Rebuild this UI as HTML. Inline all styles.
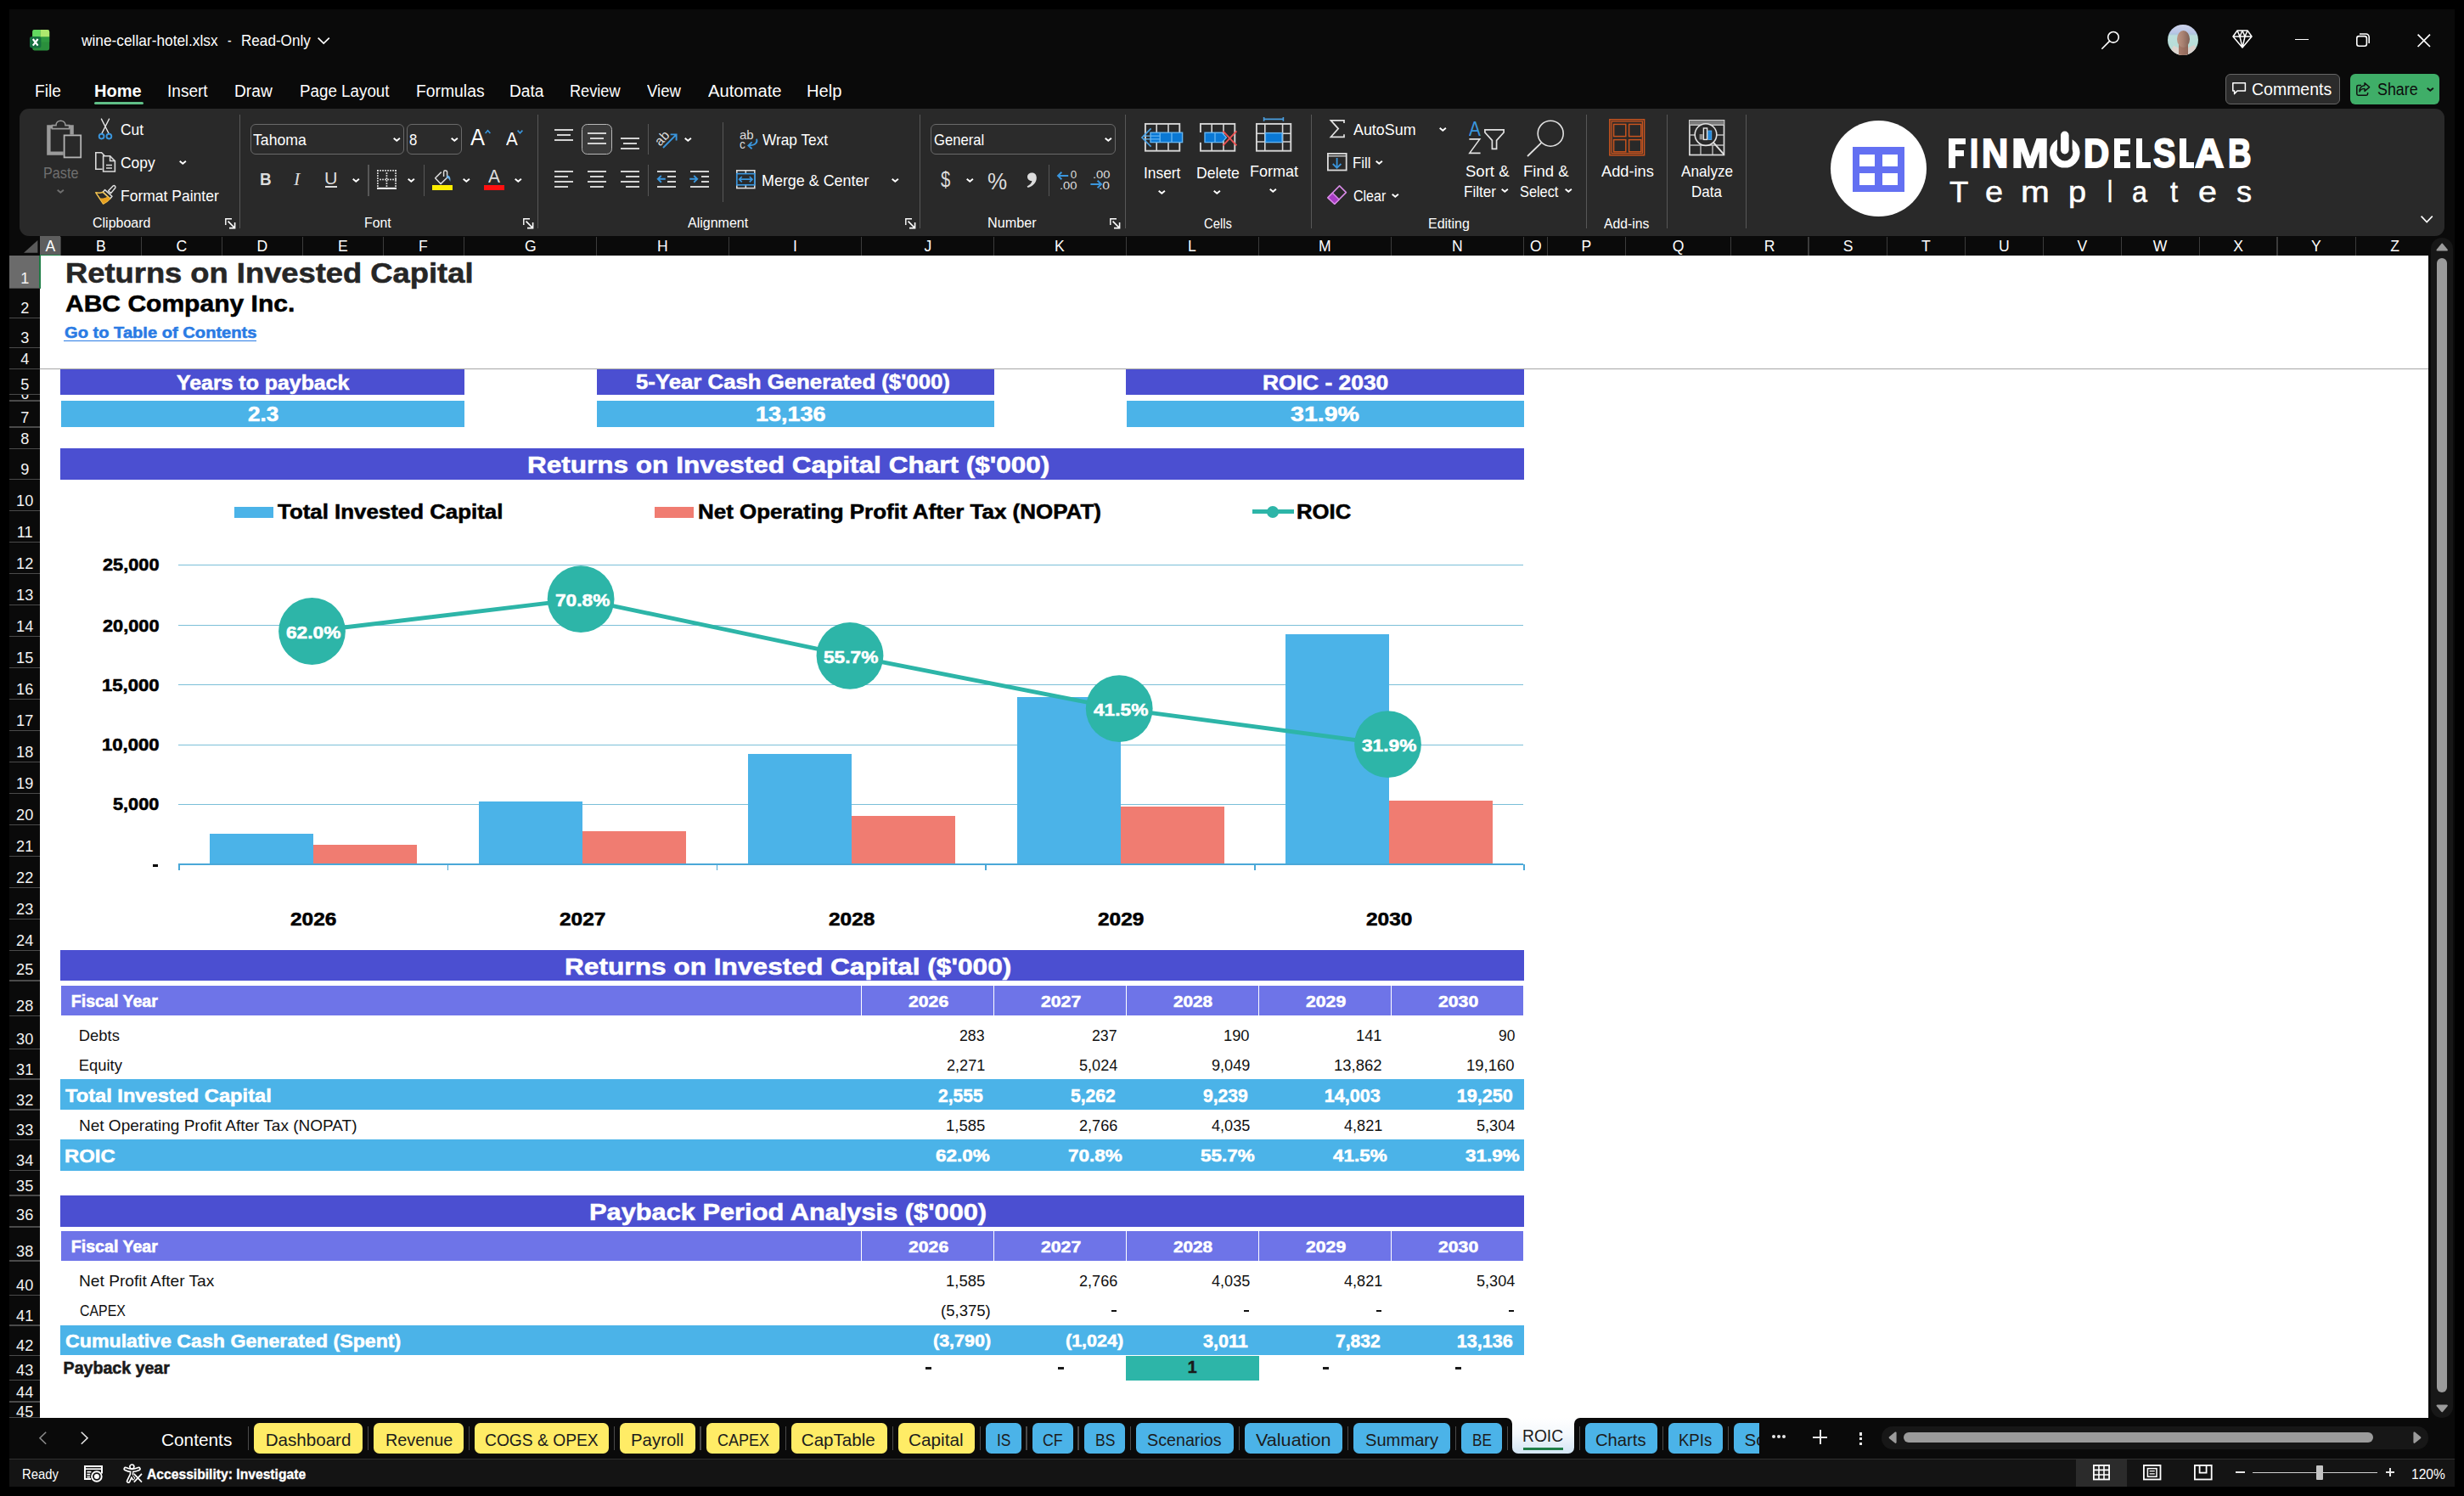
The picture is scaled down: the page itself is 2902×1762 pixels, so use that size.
<!DOCTYPE html>
<html><head><meta charset="utf-8"><title>Excel - ROIC</title>
<style>html,body{margin:0;padding:0;background:#000}
body{width:2902px;height:1762px;position:relative;overflow:hidden;font-family:'Liberation Sans',sans-serif;color:#fff}
span{display:block}</style></head>
<body>
<div style="position:absolute;left:11.00px;top:11.00px;width:2880.00px;height:1740.00px;background:#0a0a0a;"></div>
<svg style="position:absolute;left:35.00px;top:34.60px;overflow:visible;" width="24" height="25" viewBox="0 0 24 25">
      <path d="M5.6 0 H20.8 a2.4 2.4 0 0 1 2.4 2.4 V22 a2.4 2.4 0 0 1 -2.4 2.4 H5.6 a2.4 2.4 0 0 1 -2.4 -2.4 V2.4 A2.4 2.4 0 0 1 5.6 0Z" fill="#2a8f3c"/>
      <path d="M5.6 0 H12.6 V8.6 H3.2 V2.4 A2.4 2.4 0 0 1 5.6 0Z" fill="#62d860"/>
      <path d="M12.6 0 H20.8 a2.4 2.4 0 0 1 2.4 2.4 V8.6 H12.6Z" fill="#aee96e"/>
      <rect x="12.6" y="8.6" width="10.6" height="6" fill="#2f9a40"/>
      <rect x="0" y="8" width="13.4" height="13.4" rx="2.6" fill="#16703f"/>
      <path d="M3.8 11 L9.6 18.6 M9.6 11 L3.8 18.6" stroke="#fff" stroke-width="2.2"/>
    </svg>
<span style="position:absolute;left:96.15px;top:38.79px;font-size:18.2px;line-height:18.2px;font-weight:400;color:#fff;white-space:pre;transform:scaleX(0.9511);transform-origin:0 0;">wine-cellar-hotel.xlsx</span>
<span style="position:absolute;left:268.40px;top:38.79px;font-size:18.2px;line-height:18.2px;font-weight:400;color:#fff;white-space:pre;transform:scaleX(0.7667);transform-origin:0 0;">-</span>
<span style="position:absolute;left:283.66px;top:38.79px;font-size:18.2px;line-height:18.2px;font-weight:400;color:#fff;white-space:pre;transform:scaleX(0.9408);transform-origin:0 0;">Read-Only</span>
<svg style="position:absolute;left:374.00px;top:44.30px;overflow:visible;" width="14.4" height="7.6" viewBox="0 0 14.4 7.6"><polyline points="0.6,0.6 7.2,7 13.8,0.6" fill="none" stroke="#fff" stroke-width="1.7"/></svg>
<svg style="position:absolute;left:2475.00px;top:36.00px;overflow:visible;" width="22" height="22" viewBox="0 0 22 22"><circle cx="14" cy="7.8" r="6.3" fill="none" stroke="#fff" stroke-width="1.6"/><line x1="9.6" y1="12.4" x2="0.8" y2="21.2" stroke="#fff" stroke-width="1.6" stroke-linecap="round"/></svg>
<div style="position:absolute;left:2553px;top:29px;width:36px;height:36px;border-radius:50%;overflow:hidden;background:linear-gradient(180deg,#cdd4ea 0%,#b9c6e6 26%,#aec6de 31%,#bcdfdc 36%,#b6ddd7 74%,#cfe0da 100%)"><div style="position:absolute;left:3px;top:27px;width:14px;height:14px;background:#ddd5cf;transform:rotate(28deg)"></div><div style="position:absolute;left:21px;top:26px;width:14px;height:14px;background:#d8cfca;transform:rotate(-24deg)"></div><div style="position:absolute;left:13.2px;top:22px;width:11px;height:16px;background:linear-gradient(90deg,#a87c6c,#8e6658)"></div><div style="position:absolute;left:10.8px;top:6.8px;width:15.2px;height:20.4px;border-radius:50%;background:linear-gradient(90deg,#bd9584 0%,#a98272 45%,#7f6056 100%)"></div></div>
<svg style="position:absolute;left:2629.00px;top:35.00px;overflow:visible;" width="24" height="22" viewBox="0 0 24 22"><path d="M6 1 H18 L23 8 L12 21 L1 8 Z M1 8 H23 M6 1 L9 8 L12 21 L15 8 L18 1 M9 8 L12 1 L15 8" fill="none" stroke="#fff" stroke-width="1.5" stroke-linejoin="round"/></svg>
<div style="position:absolute;left:2703.00px;top:45.50px;width:16.00px;height:1.70px;background:#ffffff;"></div>
<svg style="position:absolute;left:2775.00px;top:39.00px;overflow:visible;" width="16" height="16" viewBox="0 0 16 16"><rect x="0.8" y="3.6" width="11.6" height="11.6" rx="2.4" fill="none" stroke="#fff" stroke-width="1.6"/><path d="M4 1 H11.6 a3.6 3.6 0 0 1 3.6 3.6 V12" fill="none" stroke="#fff" stroke-width="1.6"/></svg>
<svg style="position:absolute;left:2847.40px;top:39.60px;overflow:visible;" width="15.6" height="15.6" viewBox="0 0 15.6 15.6"><path d="M0.6 0.6 L15 15 M15 0.6 L0.6 15" stroke="#fff" stroke-width="1.7"/></svg>
<span style="position:absolute;left:41.02px;top:97.91px;font-size:19.6px;line-height:19.6px;font-weight:400;color:#fff;white-space:pre;transform:scaleX(0.9780);transform-origin:0 0;">File</span>
<span style="position:absolute;left:197.33px;top:97.91px;font-size:19.6px;line-height:19.6px;font-weight:400;color:#fff;white-space:pre;transform:scaleX(0.9720);transform-origin:0 0;">Insert</span>
<span style="position:absolute;left:276.42px;top:97.91px;font-size:19.6px;line-height:19.6px;font-weight:400;color:#fff;white-space:pre;transform:scaleX(0.9787);transform-origin:0 0;">Draw</span>
<span style="position:absolute;left:352.54px;top:97.91px;font-size:19.6px;line-height:19.6px;font-weight:400;color:#fff;white-space:pre;transform:scaleX(0.9590);transform-origin:0 0;">Page Layout</span>
<span style="position:absolute;left:490.21px;top:97.91px;font-size:19.6px;line-height:19.6px;font-weight:400;color:#fff;white-space:pre;transform:scaleX(0.9869);transform-origin:0 0;">Formulas</span>
<span style="position:absolute;left:599.72px;top:97.91px;font-size:19.6px;line-height:19.6px;font-weight:400;color:#fff;white-space:pre;transform:scaleX(0.9780);transform-origin:0 0;">Data</span>
<span style="position:absolute;left:670.87px;top:97.91px;font-size:19.6px;line-height:19.6px;font-weight:400;color:#fff;white-space:pre;transform:scaleX(0.9268);transform-origin:0 0;">Review</span>
<span style="position:absolute;left:762.00px;top:97.91px;font-size:19.6px;line-height:19.6px;font-weight:400;color:#fff;white-space:pre;transform:scaleX(0.9450);transform-origin:0 0;">View</span>
<span style="position:absolute;left:834.00px;top:97.91px;font-size:19.6px;line-height:19.6px;font-weight:400;color:#fff;white-space:pre;transform:scaleX(1.0325);transform-origin:0 0;">Automate</span>
<span style="position:absolute;left:949.97px;top:97.91px;font-size:19.6px;line-height:19.6px;font-weight:400;color:#fff;white-space:pre;transform:scaleX(1.0279);transform-origin:0 0;">Help</span>
<span style="position:absolute;left:110.58px;top:97.91px;font-size:19.6px;line-height:19.6px;font-weight:700;color:#fff;white-space:pre;transform:scaleX(1.0235);transform-origin:0 0;">Home</span>
<div style="position:absolute;left:111.20px;top:120.00px;width:57.60px;height:3.00px;background:#5fbe86;border-radius:1.5px"></div>
<div style="position:absolute;left:2621px;top:87.3px;width:133px;height:33.5px;border:1px solid #666;border-radius:6px;background:#2b2b2b"></div>
<svg style="position:absolute;left:2629.00px;top:97.40px;overflow:visible;" width="16.4" height="15" viewBox="0 0 16.4 15"><path d="M0.8 0.8 H15.4 V10 H6 L2.6 13.6 V10 H0.8 Z" fill="none" stroke="#fff" stroke-width="1.5" stroke-linejoin="round"/></svg>
<span style="position:absolute;left:2652.01px;top:95.81px;font-size:19.6px;line-height:19.6px;font-weight:400;color:#fff;white-space:pre;transform:scaleX(0.9944);transform-origin:0 0;">Comments</span>
<div style="position:absolute;left:2768.30px;top:87.30px;width:104.70px;height:35.50px;background:#3fae68;border-radius:6px"></div>
<svg style="position:absolute;left:2775.00px;top:97.00px;overflow:visible;" width="16.4" height="16" viewBox="0 0 16.4 16"><path d="M6 3.4 H2.4 a1.6 1.6 0 0 0 -1.6 1.6 V13.6 a1.6 1.6 0 0 0 1.6 1.6 H12 a1.6 1.6 0 0 0 1.6 -1.6 V12" fill="none" stroke="#111" stroke-width="1.5"/><path d="M10 0.8 L15.6 5.6 L10 10.4 V7.4 C7 7.4 5 8.6 4 11 C4 6.6 6.4 4 10 3.8 Z" fill="none" stroke="#111" stroke-width="1.4" stroke-linejoin="round"/></svg>
<span style="position:absolute;left:2799.70px;top:95.81px;font-size:19.6px;line-height:19.6px;font-weight:400;color:#0c0c0c;white-space:pre;transform:scaleX(0.9105);transform-origin:0 0;">Share</span>
<svg style="position:absolute;left:2858.00px;top:103.00px;overflow:visible;" width="8.6" height="5.0" viewBox="0 0 8.6 5.0"><polyline points="0.7,0.8 4.3,3.7 7.8999999999999995,0.8" fill="none" stroke="#111" stroke-width="2.0" stroke-linecap="butt" stroke-linejoin="miter"/></svg>
<div style="position:absolute;left:23.00px;top:128.00px;width:2856.00px;height:150.00px;background:#292929;border-radius:11px"></div>
<svg style="position:absolute;left:2850.50px;top:253.60px;overflow:visible;" width="14.4" height="8.4" viewBox="0 0 14.4 8.4"><polyline points="0.6,0.6 7.2,7.6 13.8,0.6" fill="none" stroke="#fff" stroke-width="1.6"/></svg>
<div style="position:absolute;left:281.90px;top:135.00px;width:1.20px;height:134.00px;background:#575757;"></div>
<div style="position:absolute;left:633.00px;top:135.00px;width:1.20px;height:134.00px;background:#575757;"></div>
<div style="position:absolute;left:1082.80px;top:135.00px;width:1.20px;height:134.00px;background:#575757;"></div>
<div style="position:absolute;left:1325.10px;top:135.00px;width:1.20px;height:134.00px;background:#575757;"></div>
<div style="position:absolute;left:1543.90px;top:135.00px;width:1.20px;height:134.00px;background:#575757;"></div>
<div style="position:absolute;left:1868.00px;top:135.00px;width:1.20px;height:134.00px;background:#575757;"></div>
<div style="position:absolute;left:1962.90px;top:135.00px;width:1.20px;height:134.00px;background:#575757;"></div>
<div style="position:absolute;left:2056.00px;top:135.00px;width:1.20px;height:134.00px;background:#575757;"></div>
<div style="position:absolute;left:850.70px;top:144.00px;width:1.20px;height:93.50px;background:#575757;"></div>
<div style="position:absolute;left:433.40px;top:194.00px;width:1.20px;height:36.50px;background:#575757;"></div>
<div style="position:absolute;left:498.70px;top:194.00px;width:1.20px;height:36.50px;background:#575757;"></div>
<div style="position:absolute;left:762.90px;top:194.00px;width:1.20px;height:36.50px;background:#575757;"></div>
<div style="position:absolute;left:1234.80px;top:194.00px;width:1.20px;height:36.50px;background:#575757;"></div>
<div style="position:absolute;left:762.90px;top:146.00px;width:1.20px;height:36.00px;background:#575757;"></div>
<span style="position:absolute;left:109.00px;top:255.09px;font-size:16.9px;line-height:16.9px;font-weight:400;color:#fff;white-space:pre;transform:scaleX(0.9457);transform-origin:0 0;">Clipboard</span>
<span style="position:absolute;left:429.06px;top:255.09px;font-size:16.9px;line-height:16.9px;font-weight:400;color:#fff;white-space:pre;transform:scaleX(0.9364);transform-origin:0 0;">Font</span>
<span style="position:absolute;left:810.30px;top:255.09px;font-size:16.9px;line-height:16.9px;font-weight:400;color:#fff;white-space:pre;transform:scaleX(0.9481);transform-origin:0 0;">Alignment</span>
<span style="position:absolute;left:1162.54px;top:255.09px;font-size:16.9px;line-height:16.9px;font-weight:400;color:#fff;white-space:pre;transform:scaleX(0.9588);transform-origin:0 0;">Number</span>
<span style="position:absolute;left:1418.00px;top:255.89px;font-size:16.9px;line-height:16.9px;font-weight:400;color:#fff;white-space:pre;transform:scaleX(0.8761);transform-origin:0 0;">Cells</span>
<span style="position:absolute;left:1681.55px;top:255.89px;font-size:16.9px;line-height:16.9px;font-weight:400;color:#fff;white-space:pre;transform:scaleX(0.9472);transform-origin:0 0;">Editing</span>
<span style="position:absolute;left:1888.50px;top:255.89px;font-size:16.9px;line-height:16.9px;font-weight:400;color:#fff;white-space:pre;transform:scaleX(0.9327);transform-origin:0 0;">Add-ins</span>
<svg style="position:absolute;left:264.80px;top:256.80px;overflow:visible;" width="12.4" height="12.4" viewBox="0 0 12.4 12.4"><path d="M0.8 8 V0.8 H8" fill="none" stroke="#fff" stroke-width="1.4"/><path d="M3.6 3.6 L11.2 11.2 M11.6 5 V11.6 H5" fill="none" stroke="#fff" stroke-width="1.6"/></svg>
<svg style="position:absolute;left:616.00px;top:256.80px;overflow:visible;" width="12.4" height="12.4" viewBox="0 0 12.4 12.4"><path d="M0.8 8 V0.8 H8" fill="none" stroke="#fff" stroke-width="1.4"/><path d="M3.6 3.6 L11.2 11.2 M11.6 5 V11.6 H5" fill="none" stroke="#fff" stroke-width="1.6"/></svg>
<svg style="position:absolute;left:1065.50px;top:256.80px;overflow:visible;" width="12.4" height="12.4" viewBox="0 0 12.4 12.4"><path d="M0.8 8 V0.8 H8" fill="none" stroke="#fff" stroke-width="1.4"/><path d="M3.6 3.6 L11.2 11.2 M11.6 5 V11.6 H5" fill="none" stroke="#fff" stroke-width="1.6"/></svg>
<svg style="position:absolute;left:1307.40px;top:256.80px;overflow:visible;" width="12.4" height="12.4" viewBox="0 0 12.4 12.4"><path d="M0.8 8 V0.8 H8" fill="none" stroke="#fff" stroke-width="1.4"/><path d="M3.6 3.6 L11.2 11.2 M11.6 5 V11.6 H5" fill="none" stroke="#fff" stroke-width="1.6"/></svg>
<span style="position:absolute;left:51.11px;top:195.19px;font-size:18.2px;line-height:18.2px;font-weight:400;color:#6f6f6f;white-space:pre;transform:scaleX(0.8900);transform-origin:0 0;">Paste</span>
<svg style="position:absolute;left:67.00px;top:223.40px;overflow:visible;" width="8.6" height="5.0" viewBox="0 0 8.6 5.0"><polyline points="0.7,0.8 4.3,3.7 7.8999999999999995,0.8" fill="none" stroke="#6f6f6f" stroke-width="2.0" stroke-linecap="butt" stroke-linejoin="miter"/></svg>
<span style="position:absolute;left:142.00px;top:143.99px;font-size:18.2px;line-height:18.2px;font-weight:400;color:#fff;white-space:pre;transform:scaleX(0.9558);transform-origin:0 0;">Cut</span>
<span style="position:absolute;left:142.00px;top:183.19px;font-size:18.2px;line-height:18.2px;font-weight:400;color:#fff;white-space:pre;transform:scaleX(0.9593);transform-origin:0 0;">Copy</span>
<svg style="position:absolute;left:211.00px;top:189.20px;overflow:visible;" width="8.6" height="5.0" viewBox="0 0 8.6 5.0"><polyline points="0.7,0.8 4.3,3.7 7.8999999999999995,0.8" fill="none" stroke="#fff" stroke-width="2.0" stroke-linecap="butt" stroke-linejoin="miter"/></svg>
<span style="position:absolute;left:141.64px;top:222.19px;font-size:18.2px;line-height:18.2px;font-weight:400;color:#fff;white-space:pre;transform:scaleX(0.9621);transform-origin:0 0;">Format Painter</span>
<div style="position:absolute;border:1px solid #6a6a6a;border-radius:6px;background:#2b2b2b;box-sizing:border-box;left:295px;top:146px;width:180.5px;height:36px"></div>
<div style="position:absolute;border:1px solid #6a6a6a;border-radius:6px;background:#2b2b2b;box-sizing:border-box;left:479px;top:146px;width:64.6px;height:36px"></div>
<span style="position:absolute;left:298.00px;top:156.19px;font-size:18.2px;line-height:18.2px;font-weight:400;color:#fff;white-space:pre;transform:scaleX(0.9697);transform-origin:0 0;">Tahoma</span>
<svg style="position:absolute;left:462.60px;top:161.60px;overflow:visible;" width="8.6" height="5.0" viewBox="0 0 8.6 5.0"><polyline points="0.7,0.8 4.3,3.7 7.8999999999999995,0.8" fill="none" stroke="#fff" stroke-width="2.0" stroke-linecap="butt" stroke-linejoin="miter"/></svg>
<span style="position:absolute;left:482.00px;top:156.19px;font-size:18.2px;line-height:18.2px;font-weight:400;color:#fff;white-space:pre;transform:scaleX(0.9200);transform-origin:0 0;">8</span>
<svg style="position:absolute;left:530.70px;top:161.60px;overflow:visible;" width="8.6" height="5.0" viewBox="0 0 8.6 5.0"><polyline points="0.7,0.8 4.3,3.7 7.8999999999999995,0.8" fill="none" stroke="#fff" stroke-width="2.0" stroke-linecap="butt" stroke-linejoin="miter"/></svg>
<span style="position:absolute;left:554.00px;top:149.14px;font-size:27px;line-height:27px;font-weight:400;color:#fff;white-space:pre;transform:scaleX(0.9444);transform-origin:0 0;">A</span>
<svg style="position:absolute;left:571.00px;top:153.00px;overflow:visible;" width="7" height="4.4" viewBox="0 0 7 4.4"><polyline points="0.6,4 3.5,0.8 6.4,4" fill="none" stroke="#3a96dd" stroke-width="1.6"/></svg>
<span style="position:absolute;left:595.70px;top:153.38px;font-size:22px;line-height:22px;font-weight:400;color:#fff;white-space:pre;transform:scaleX(0.9333);transform-origin:0 0;">A</span>
<svg style="position:absolute;left:609.00px;top:153.40px;overflow:visible;" width="7" height="4.4" viewBox="0 0 7 4.4"><polyline points="0.6,0.6 3.5,3.8 6.4,0.6" fill="none" stroke="#3a96dd" stroke-width="1.6"/></svg>
<span style="position:absolute;left:306.08px;top:200.65px;font-size:20.5px;line-height:20.5px;font-weight:700;color:#dcdcdc;white-space:pre;transform:scaleX(0.9231);transform-origin:0 0;">B</span>
<span style="position:absolute;left:346px;top:199.5px;font-family:'Liberation Serif',serif;font-style:italic;font-size:22px;line-height:22px;color:#dcdcdc">I</span>
<span style="position:absolute;left:382.40px;top:200.69px;font-size:19.5px;line-height:19.5px;font-weight:400;color:#dcdcdc;white-space:pre;transform:scaleX(1.1000);transform-origin:0 0;">U</span>
<div style="position:absolute;left:383.00px;top:219.30px;width:14.00px;height:1.60px;background:#dcdcdc;"></div>
<svg style="position:absolute;left:415.00px;top:210.00px;overflow:visible;" width="8.6" height="5.0" viewBox="0 0 8.6 5.0"><polyline points="0.7,0.8 4.3,3.7 7.8999999999999995,0.8" fill="none" stroke="#fff" stroke-width="2.0" stroke-linecap="butt" stroke-linejoin="miter"/></svg>
<svg style="position:absolute;left:480.00px;top:210.00px;overflow:visible;" width="8.6" height="5.0" viewBox="0 0 8.6 5.0"><polyline points="0.7,0.8 4.3,3.7 7.8999999999999995,0.8" fill="none" stroke="#fff" stroke-width="2.0" stroke-linecap="butt" stroke-linejoin="miter"/></svg>
<svg style="position:absolute;left:545.00px;top:210.00px;overflow:visible;" width="8.6" height="5.0" viewBox="0 0 8.6 5.0"><polyline points="0.7,0.8 4.3,3.7 7.8999999999999995,0.8" fill="none" stroke="#fff" stroke-width="2.0" stroke-linecap="butt" stroke-linejoin="miter"/></svg>
<svg style="position:absolute;left:605.80px;top:210.00px;overflow:visible;" width="8.6" height="5.0" viewBox="0 0 8.6 5.0"><polyline points="0.7,0.8 4.3,3.7 7.8999999999999995,0.8" fill="none" stroke="#fff" stroke-width="2.0" stroke-linecap="butt" stroke-linejoin="miter"/></svg>
<div style="position:absolute;left:509.00px;top:218.30px;width:24.00px;height:5.70px;background:#ffee00;"></div>
<div style="position:absolute;left:570.00px;top:218.30px;width:24.00px;height:5.70px;background:#ff1010;"></div>
<span style="position:absolute;left:575.00px;top:198.40px;font-size:21.5px;line-height:21.5px;font-weight:400;color:#dcdcdc;white-space:pre;transform:scaleX(0.9733);transform-origin:0 0;">A</span>
<svg style="position:absolute;left:805.70px;top:161.60px;overflow:visible;" width="8.6" height="5.0" viewBox="0 0 8.6 5.0"><polyline points="0.7,0.8 4.3,3.7 7.8999999999999995,0.8" fill="none" stroke="#fff" stroke-width="2.0" stroke-linecap="butt" stroke-linejoin="miter"/></svg>
<span style="position:absolute;left:897.60px;top:155.79px;font-size:18.2px;line-height:18.2px;font-weight:400;color:#fff;white-space:pre;transform:scaleX(0.9499);transform-origin:0 0;">Wrap Text</span>
<span style="position:absolute;left:896.62px;top:203.99px;font-size:18.2px;line-height:18.2px;font-weight:400;color:#fff;white-space:pre;transform:scaleX(0.9849);transform-origin:0 0;">Merge &amp; Center</span>
<svg style="position:absolute;left:1050.00px;top:209.80px;overflow:visible;" width="8.6" height="5.0" viewBox="0 0 8.6 5.0"><polyline points="0.7,0.8 4.3,3.7 7.8999999999999995,0.8" fill="none" stroke="#fff" stroke-width="2.0" stroke-linecap="butt" stroke-linejoin="miter"/></svg>
<div style="position:absolute;border:1px solid #6a6a6a;border-radius:6px;background:#2b2b2b;box-sizing:border-box;left:1096.4px;top:146px;width:218px;height:36px"></div>
<span style="position:absolute;left:1099.60px;top:156.39px;font-size:18.2px;line-height:18.2px;font-weight:400;color:#fff;white-space:pre;transform:scaleX(0.9142);transform-origin:0 0;">General</span>
<svg style="position:absolute;left:1301.00px;top:161.60px;overflow:visible;" width="8.6" height="5.0" viewBox="0 0 8.6 5.0"><polyline points="0.7,0.8 4.3,3.7 7.8999999999999995,0.8" fill="none" stroke="#fff" stroke-width="2.0" stroke-linecap="butt" stroke-linejoin="miter"/></svg>
<span style="position:absolute;left:1107.50px;top:199.30px;font-size:25.4px;line-height:25.4px;font-weight:400;color:#dcdcdc;white-space:pre;transform:scaleX(0.8000);transform-origin:0 0;">$</span>
<svg style="position:absolute;left:1138.00px;top:210.00px;overflow:visible;" width="8.6" height="5.0" viewBox="0 0 8.6 5.0"><polyline points="0.7,0.8 4.3,3.7 7.8999999999999995,0.8" fill="none" stroke="#fff" stroke-width="2.0" stroke-linecap="butt" stroke-linejoin="miter"/></svg>
<span style="position:absolute;left:1162.88px;top:198.76px;font-size:28.4px;line-height:28.4px;font-weight:400;color:#dcdcdc;white-space:pre;transform:scaleX(0.9167);transform-origin:0 0;">%</span>
<svg style="position:absolute;left:1209.00px;top:203.00px;overflow:visible;" width="12" height="17.8" viewBox="0 0 12 17.8"><path d="M6.6 0.4 C10 0.4 11.8 3 11.8 6.4 C11.8 11.6 8 16.2 1.6 18 L0.6 16.4 C4.2 14.8 6.2 12.4 6.4 10 C3.6 10.2 1 8.2 1 5.2 C1 2.4 3.4 0.4 6.6 0.4 Z" fill="#dcdcdc"/></svg>
<span style="position:absolute;left:1346.65px;top:194.99px;font-size:18.2px;line-height:18.2px;font-weight:400;color:#fff;white-space:pre;transform:scaleX(0.9542);transform-origin:0 0;">Insert</span>
<svg style="position:absolute;left:1363.80px;top:224.20px;overflow:visible;" width="8.6" height="5.0" viewBox="0 0 8.6 5.0"><polyline points="0.7,0.8 4.3,3.7 7.8999999999999995,0.8" fill="none" stroke="#fff" stroke-width="2.0" stroke-linecap="butt" stroke-linejoin="miter"/></svg>
<span style="position:absolute;left:1408.53px;top:194.99px;font-size:18.2px;line-height:18.2px;font-weight:400;color:#fff;white-space:pre;transform:scaleX(0.9678);transform-origin:0 0;">Delete</span>
<svg style="position:absolute;left:1428.70px;top:224.20px;overflow:visible;" width="8.6" height="5.0" viewBox="0 0 8.6 5.0"><polyline points="0.7,0.8 4.3,3.7 7.8999999999999995,0.8" fill="none" stroke="#fff" stroke-width="2.0" stroke-linecap="butt" stroke-linejoin="miter"/></svg>
<span style="position:absolute;left:1472.01px;top:192.89px;font-size:18.2px;line-height:18.2px;font-weight:400;color:#fff;white-space:pre;transform:scaleX(0.9903);transform-origin:0 0;">Format</span>
<svg style="position:absolute;left:1494.80px;top:222.20px;overflow:visible;" width="8.6" height="5.0" viewBox="0 0 8.6 5.0"><polyline points="0.7,0.8 4.3,3.7 7.8999999999999995,0.8" fill="none" stroke="#fff" stroke-width="2.0" stroke-linecap="butt" stroke-linejoin="miter"/></svg>
<span style="position:absolute;left:1593.60px;top:143.99px;font-size:18.2px;line-height:18.2px;font-weight:400;color:#fff;white-space:pre;transform:scaleX(0.9829);transform-origin:0 0;">AutoSum</span>
<svg style="position:absolute;left:1695.00px;top:150.40px;overflow:visible;" width="8.6" height="5.0" viewBox="0 0 8.6 5.0"><polyline points="0.7,0.8 4.3,3.7 7.8999999999999995,0.8" fill="none" stroke="#fff" stroke-width="2.0" stroke-linecap="butt" stroke-linejoin="miter"/></svg>
<span style="position:absolute;left:1593.08px;top:183.19px;font-size:18.2px;line-height:18.2px;font-weight:400;color:#fff;white-space:pre;transform:scaleX(0.9202);transform-origin:0 0;">Fill</span>
<svg style="position:absolute;left:1620.00px;top:188.80px;overflow:visible;" width="8.6" height="5.0" viewBox="0 0 8.6 5.0"><polyline points="0.7,0.8 4.3,3.7 7.8999999999999995,0.8" fill="none" stroke="#fff" stroke-width="2.0" stroke-linecap="butt" stroke-linejoin="miter"/></svg>
<span style="position:absolute;left:1593.60px;top:222.19px;font-size:18.2px;line-height:18.2px;font-weight:400;color:#fff;white-space:pre;transform:scaleX(0.8801);transform-origin:0 0;">Clear</span>
<svg style="position:absolute;left:1638.50px;top:228.00px;overflow:visible;" width="8.6" height="5.0" viewBox="0 0 8.6 5.0"><polyline points="0.7,0.8 4.3,3.7 7.8999999999999995,0.8" fill="none" stroke="#fff" stroke-width="2.0" stroke-linecap="butt" stroke-linejoin="miter"/></svg>
<span style="position:absolute;left:1725.50px;top:192.89px;font-size:18.2px;line-height:18.2px;font-weight:400;color:#fff;white-space:pre;transform:scaleX(1.0197);transform-origin:0 0;">Sort &amp;</span>
<span style="position:absolute;left:1723.76px;top:217.19px;font-size:18.2px;line-height:18.2px;font-weight:400;color:#fff;white-space:pre;transform:scaleX(0.9375);transform-origin:0 0;">Filter</span>
<svg style="position:absolute;left:1768.00px;top:222.40px;overflow:visible;" width="8.6" height="5.0" viewBox="0 0 8.6 5.0"><polyline points="0.7,0.8 4.3,3.7 7.8999999999999995,0.8" fill="none" stroke="#fff" stroke-width="2.0" stroke-linecap="butt" stroke-linejoin="miter"/></svg>
<span style="position:absolute;left:1794.48px;top:192.89px;font-size:18.2px;line-height:18.2px;font-weight:400;color:#fff;white-space:pre;transform:scaleX(1.0188);transform-origin:0 0;">Find &amp;</span>
<span style="position:absolute;left:1790.40px;top:217.19px;font-size:18.2px;line-height:18.2px;font-weight:400;color:#fff;white-space:pre;transform:scaleX(0.8971);transform-origin:0 0;">Select</span>
<svg style="position:absolute;left:1842.80px;top:222.40px;overflow:visible;" width="8.6" height="5.0" viewBox="0 0 8.6 5.0"><polyline points="0.7,0.8 4.3,3.7 7.8999999999999995,0.8" fill="none" stroke="#fff" stroke-width="2.0" stroke-linecap="butt" stroke-linejoin="miter"/></svg>
<span style="position:absolute;left:1885.60px;top:192.89px;font-size:18.2px;line-height:18.2px;font-weight:400;color:#fff;white-space:pre;transform:scaleX(1.0037);transform-origin:0 0;">Add-ins</span>
<span style="position:absolute;left:1980.00px;top:192.89px;font-size:18.2px;line-height:18.2px;font-weight:400;color:#fff;white-space:pre;transform:scaleX(0.9444);transform-origin:0 0;">Analyze</span>
<span style="position:absolute;left:1991.77px;top:217.19px;font-size:18.2px;line-height:18.2px;font-weight:400;color:#fff;white-space:pre;transform:scaleX(0.9321);transform-origin:0 0;">Data</span>
<div style="position:absolute;left:2156px;top:142.4px;width:113px;height:113px;border-radius:50%;background:#fff"></div>
<div style="position:absolute;left:2182.00px;top:173.20px;width:61.00px;height:52.80px;background:#6370f2;"></div>
<div style="position:absolute;left:2190.00px;top:181.80px;width:18.40px;height:13.90px;background:#fff;"></div>
<div style="position:absolute;left:2190.00px;top:203.80px;width:18.40px;height:13.90px;background:#fff;"></div>
<div style="position:absolute;left:2216.50px;top:181.80px;width:18.40px;height:13.90px;background:#fff;"></div>
<div style="position:absolute;left:2216.50px;top:203.80px;width:18.40px;height:13.90px;background:#fff;"></div>
<span style="position:absolute;left:2319.71px;top:157.31px;font-size:47.6px;line-height:47.6px;font-weight:700;color:#fff;white-space:pre;transform:scaleX(0.7625);transform-origin:0 0;-webkit-text-stroke:2px #fff;">I</span>
<span style="position:absolute;left:2334.27px;top:157.31px;font-size:47.6px;line-height:47.6px;font-weight:700;color:#fff;white-space:pre;transform:scaleX(0.9103);transform-origin:0 0;-webkit-text-stroke:2px #fff;">N</span>
<span style="position:absolute;left:2368.56px;top:157.31px;font-size:47.6px;line-height:47.6px;font-weight:700;color:#fff;white-space:pre;transform:scaleX(1.1118);transform-origin:0 0;-webkit-text-stroke:2px #fff;">M</span>
<span style="position:absolute;left:2453.66px;top:157.31px;font-size:47.6px;line-height:47.6px;font-weight:700;color:#fff;white-space:pre;transform:scaleX(0.8800);transform-origin:0 0;-webkit-text-stroke:2px #fff;">D</span>
<span style="position:absolute;left:2535.87px;top:157.31px;font-size:47.6px;line-height:47.6px;font-weight:700;color:#fff;white-space:pre;transform:scaleX(0.8276);transform-origin:0 0;-webkit-text-stroke:2px #fff;">S</span>
<span style="position:absolute;left:2584.80px;top:157.31px;font-size:47.6px;line-height:47.6px;font-weight:700;color:#fff;white-space:pre;transform:scaleX(0.9970);transform-origin:0 0;-webkit-text-stroke:2px #fff;">A</span>
<span style="position:absolute;left:2624.40px;top:157.31px;font-size:47.6px;line-height:47.6px;font-weight:700;color:#fff;white-space:pre;transform:scaleX(0.8000);transform-origin:0 0;-webkit-text-stroke:2px #fff;">B</span>
<div style="position:absolute;left:2295.40px;top:162.80px;width:7.30px;height:34.80px;background:#fff;"></div>
<div style="position:absolute;left:2295.40px;top:162.80px;width:19.50px;height:7.00px;background:#fff;"></div>
<div style="position:absolute;left:2295.40px;top:176.70px;width:17.80px;height:7.00px;background:#fff;"></div>
<div style="position:absolute;left:2490.20px;top:162.80px;width:7.30px;height:34.80px;background:#fff;"></div>
<div style="position:absolute;left:2490.20px;top:162.80px;width:18.70px;height:7.00px;background:#fff;"></div>
<div style="position:absolute;left:2490.20px;top:176.70px;width:17.20px;height:7.00px;background:#fff;"></div>
<div style="position:absolute;left:2490.20px;top:190.60px;width:18.70px;height:7.00px;background:#fff;"></div>
<div style="position:absolute;left:2516.20px;top:162.80px;width:7.30px;height:34.80px;background:#fff;"></div>
<div style="position:absolute;left:2516.20px;top:190.60px;width:17.00px;height:7.00px;background:#fff;"></div>
<div style="position:absolute;left:2567.30px;top:162.80px;width:7.30px;height:34.80px;background:#fff;"></div>
<div style="position:absolute;left:2567.30px;top:190.60px;width:17.10px;height:7.00px;background:#fff;"></div>
<svg style="position:absolute;left:2412.00px;top:150.00px;overflow:visible;" width="40" height="50" viewBox="0 0 40 50"><circle cx="19.8" cy="29.8" r="13.7" fill="none" stroke="#fff" stroke-width="8.2"/><rect x="11" y="4" width="17.6" height="29" rx="8" fill="#292929"/><rect x="15" y="4.6" width="9.6" height="26.8" rx="4.8" fill="#fff"/></svg>
<span style="position:absolute;left:2295.60px;top:208.20px;font-size:35.2px;line-height:35.2px;font-weight:400;color:#fff;white-space:pre;transform:scaleX(1.0429);transform-origin:0 0;-webkit-text-stroke:0.5px #fff;">T</span>
<span style="position:absolute;left:2337.52px;top:208.20px;font-size:35.2px;line-height:35.2px;font-weight:400;color:#fff;white-space:pre;transform:scaleX(1.0765);transform-origin:0 0;-webkit-text-stroke:0.5px #fff;">e</span>
<span style="position:absolute;left:2380.20px;top:208.20px;font-size:35.2px;line-height:35.2px;font-weight:400;color:#fff;white-space:pre;transform:scaleX(1.1520);transform-origin:0 0;-webkit-text-stroke:0.5px #fff;">m</span>
<span style="position:absolute;left:2436.35px;top:208.20px;font-size:35.2px;line-height:35.2px;font-weight:400;color:#fff;white-space:pre;transform:scaleX(1.0765);transform-origin:0 0;-webkit-text-stroke:0.5px #fff;">p</span>
<span style="position:absolute;left:2482.35px;top:208.20px;font-size:35.2px;line-height:35.2px;font-weight:400;color:#fff;white-space:pre;transform:scaleX(0.7750);transform-origin:0 0;-webkit-text-stroke:0.5px #fff;">l</span>
<span style="position:absolute;left:2511.38px;top:208.20px;font-size:35.2px;line-height:35.2px;font-weight:400;color:#fff;white-space:pre;transform:scaleX(0.9211);transform-origin:0 0;-webkit-text-stroke:0.5px #fff;">a</span>
<span style="position:absolute;left:2556.20px;top:208.20px;font-size:35.2px;line-height:35.2px;font-weight:400;color:#fff;white-space:pre;transform:scaleX(0.9300);transform-origin:0 0;-webkit-text-stroke:0.5px #fff;">t</span>
<span style="position:absolute;left:2589.08px;top:208.20px;font-size:35.2px;line-height:35.2px;font-weight:400;color:#fff;white-space:pre;transform:scaleX(1.1235);transform-origin:0 0;-webkit-text-stroke:0.5px #fff;">e</span>
<span style="position:absolute;left:2634.10px;top:208.20px;font-size:35.2px;line-height:35.2px;font-weight:400;color:#fff;white-space:pre;transform:scaleX(1.0294);transform-origin:0 0;-webkit-text-stroke:0.5px #fff;">s</span>
<div style="position:absolute;left:47.40px;top:301.00px;width:2812.90px;height:1368.50px;background:#fff;"></div>
<svg style="position:absolute;left:27.60px;top:283.00px;overflow:visible;" width="16.4" height="14.8" viewBox="0 0 16.4 14.8"><path d="M16.4 0 V14.8 H0 Z" fill="#5a5a5a"/></svg>
<div style="position:absolute;left:47.40px;top:278.40px;width:24.00px;height:22.60px;background:#5e5e5e;"></div>
<div style="position:absolute;left:47.40px;top:299.80px;width:24.00px;height:1.60px;background:#1f7d46;"></div>
<span style="position:absolute;left:53.40px;top:282.10px;font-size:17.6px;line-height:17.6px;font-weight:400;color:#fff;white-space:pre;">A</span>
<div style="position:absolute;left:70.80px;top:278.60px;width:1.20px;height:22.40px;background:#3c3c3c;"></div>
<span style="position:absolute;left:112.90px;top:282.10px;font-size:17.6px;line-height:17.6px;font-weight:400;color:#fff;white-space:pre;">B</span>
<div style="position:absolute;left:165.80px;top:278.60px;width:1.20px;height:22.40px;background:#3c3c3c;"></div>
<span style="position:absolute;left:207.45px;top:282.10px;font-size:17.6px;line-height:17.6px;font-weight:400;color:#fff;white-space:pre;">C</span>
<div style="position:absolute;left:260.90px;top:278.60px;width:1.20px;height:22.40px;background:#3c3c3c;"></div>
<span style="position:absolute;left:302.55px;top:282.10px;font-size:17.6px;line-height:17.6px;font-weight:400;color:#fff;white-space:pre;">D</span>
<div style="position:absolute;left:356.00px;top:278.60px;width:1.20px;height:22.40px;background:#3c3c3c;"></div>
<span style="position:absolute;left:398.10px;top:282.10px;font-size:17.6px;line-height:17.6px;font-weight:400;color:#fff;white-space:pre;">E</span>
<div style="position:absolute;left:451.00px;top:278.60px;width:1.20px;height:22.40px;background:#3c3c3c;"></div>
<span style="position:absolute;left:493.05px;top:282.10px;font-size:17.6px;line-height:17.6px;font-weight:400;color:#fff;white-space:pre;">F</span>
<div style="position:absolute;left:545.90px;top:278.60px;width:1.20px;height:22.40px;background:#3c3c3c;"></div>
<span style="position:absolute;left:618.00px;top:282.10px;font-size:17.6px;line-height:17.6px;font-weight:400;color:#fff;white-space:pre;">G</span>
<div style="position:absolute;left:701.90px;top:278.60px;width:1.20px;height:22.40px;background:#3c3c3c;"></div>
<span style="position:absolute;left:774.00px;top:282.10px;font-size:17.6px;line-height:17.6px;font-weight:400;color:#fff;white-space:pre;">H</span>
<div style="position:absolute;left:857.90px;top:278.60px;width:1.20px;height:22.40px;background:#3c3c3c;"></div>
<span style="position:absolute;left:933.95px;top:282.10px;font-size:17.6px;line-height:17.6px;font-weight:400;color:#fff;white-space:pre;">I</span>
<div style="position:absolute;left:1013.80px;top:278.60px;width:1.20px;height:22.40px;background:#3c3c3c;"></div>
<span style="position:absolute;left:1088.45px;top:282.10px;font-size:17.6px;line-height:17.6px;font-weight:400;color:#fff;white-space:pre;">J</span>
<div style="position:absolute;left:1169.90px;top:278.60px;width:1.20px;height:22.40px;background:#3c3c3c;"></div>
<span style="position:absolute;left:1241.95px;top:282.10px;font-size:17.6px;line-height:17.6px;font-weight:400;color:#fff;white-space:pre;">K</span>
<div style="position:absolute;left:1325.80px;top:278.60px;width:1.20px;height:22.40px;background:#3c3c3c;"></div>
<span style="position:absolute;left:1398.90px;top:282.10px;font-size:17.6px;line-height:17.6px;font-weight:400;color:#fff;white-space:pre;">L</span>
<div style="position:absolute;left:1481.80px;top:278.60px;width:1.20px;height:22.40px;background:#3c3c3c;"></div>
<span style="position:absolute;left:1552.90px;top:282.10px;font-size:17.6px;line-height:17.6px;font-weight:400;color:#fff;white-space:pre;">M</span>
<div style="position:absolute;left:1637.80px;top:278.60px;width:1.20px;height:22.40px;background:#3c3c3c;"></div>
<span style="position:absolute;left:1709.90px;top:282.10px;font-size:17.6px;line-height:17.6px;font-weight:400;color:#fff;white-space:pre;">N</span>
<div style="position:absolute;left:1793.80px;top:278.60px;width:1.20px;height:22.40px;background:#3c3c3c;"></div>
<span style="position:absolute;left:1802.00px;top:282.10px;font-size:17.6px;line-height:17.6px;font-weight:400;color:#fff;white-space:pre;">O</span>
<div style="position:absolute;left:1822.00px;top:278.60px;width:1.20px;height:22.40px;background:#3c3c3c;"></div>
<span style="position:absolute;left:1862.45px;top:282.10px;font-size:17.6px;line-height:17.6px;font-weight:400;color:#fff;white-space:pre;">P</span>
<div style="position:absolute;left:1913.70px;top:278.60px;width:1.20px;height:22.40px;background:#3c3c3c;"></div>
<span style="position:absolute;left:1969.80px;top:282.10px;font-size:17.6px;line-height:17.6px;font-weight:400;color:#fff;white-space:pre;">Q</span>
<div style="position:absolute;left:2037.70px;top:278.60px;width:1.20px;height:22.40px;background:#3c3c3c;"></div>
<span style="position:absolute;left:2077.65px;top:282.10px;font-size:17.6px;line-height:17.6px;font-weight:400;color:#fff;white-space:pre;">R</span>
<div style="position:absolute;left:2129.40px;top:278.60px;width:1.20px;height:22.40px;background:#3c3c3c;"></div>
<span style="position:absolute;left:2170.70px;top:282.10px;font-size:17.6px;line-height:17.6px;font-weight:400;color:#fff;white-space:pre;">S</span>
<div style="position:absolute;left:2221.80px;top:278.60px;width:1.20px;height:22.40px;background:#3c3c3c;"></div>
<span style="position:absolute;left:2263.00px;top:282.10px;font-size:17.6px;line-height:17.6px;font-weight:400;color:#fff;white-space:pre;">T</span>
<div style="position:absolute;left:2314.00px;top:278.60px;width:1.20px;height:22.40px;background:#3c3c3c;"></div>
<span style="position:absolute;left:2354.00px;top:282.10px;font-size:17.6px;line-height:17.6px;font-weight:400;color:#fff;white-space:pre;">U</span>
<div style="position:absolute;left:2405.80px;top:278.60px;width:1.20px;height:22.40px;background:#3c3c3c;"></div>
<span style="position:absolute;left:2446.40px;top:282.10px;font-size:17.6px;line-height:17.6px;font-weight:400;color:#fff;white-space:pre;">V</span>
<div style="position:absolute;left:2497.80px;top:278.60px;width:1.20px;height:22.40px;background:#3c3c3c;"></div>
<span style="position:absolute;left:2535.85px;top:282.10px;font-size:17.6px;line-height:17.6px;font-weight:400;color:#fff;white-space:pre;">W</span>
<div style="position:absolute;left:2589.70px;top:278.60px;width:1.20px;height:22.40px;background:#3c3c3c;"></div>
<span style="position:absolute;left:2630.15px;top:282.10px;font-size:17.6px;line-height:17.6px;font-weight:400;color:#fff;white-space:pre;">X</span>
<div style="position:absolute;left:2681.40px;top:278.60px;width:1.20px;height:22.40px;background:#3c3c3c;"></div>
<span style="position:absolute;left:2722.10px;top:282.10px;font-size:17.6px;line-height:17.6px;font-weight:400;color:#fff;white-space:pre;">Y</span>
<div style="position:absolute;left:2773.60px;top:278.60px;width:1.20px;height:22.40px;background:#3c3c3c;"></div>
<span style="position:absolute;left:2815.30px;top:282.10px;font-size:17.6px;line-height:17.6px;font-weight:400;color:#fff;white-space:pre;">Z</span>
<div style="position:absolute;left:11.00px;top:301.00px;width:36.40px;height:38.60px;background:#6b6b6b;"></div>
<div style="position:absolute;left:46.40px;top:301.00px;width:1.40px;height:38.60px;background:#1f7d46;"></div>
<div style="position:absolute;left:11.00px;top:338.80px;width:36.40px;height:1.40px;background:#4a4a4a;"></div>
<div style="position:absolute;left:11px;top:301.00px;width:36.4px;height:38.60px;overflow:hidden"><span style="position:absolute;left:0;width:36.4px;text-align:center;top:19.13px;font-size:17.8px;line-height:17.8px;color:#f2f2f2;transform:scaleX(1.02)">1</span></div>
<div style="position:absolute;left:11.00px;top:373.70px;width:36.40px;height:1.40px;background:#4a4a4a;"></div>
<div style="position:absolute;left:11px;top:339.60px;width:36.4px;height:34.90px;overflow:hidden"><span style="position:absolute;left:0;width:36.4px;text-align:center;top:15.43px;font-size:17.8px;line-height:17.8px;color:#f2f2f2;transform:scaleX(1.02)">2</span></div>
<div style="position:absolute;left:11.00px;top:408.60px;width:36.40px;height:1.40px;background:#4a4a4a;"></div>
<div style="position:absolute;left:11px;top:374.50px;width:36.4px;height:34.90px;overflow:hidden"><span style="position:absolute;left:0;width:36.4px;text-align:center;top:15.43px;font-size:17.8px;line-height:17.8px;color:#f2f2f2;transform:scaleX(1.02)">3</span></div>
<div style="position:absolute;left:11.00px;top:433.60px;width:36.40px;height:1.40px;background:#4a4a4a;"></div>
<div style="position:absolute;left:11px;top:409.40px;width:36.4px;height:25.00px;overflow:hidden"><span style="position:absolute;left:0;width:36.4px;text-align:center;top:5.53px;font-size:17.8px;line-height:17.8px;color:#f2f2f2;transform:scaleX(1.02)">4</span></div>
<div style="position:absolute;left:11.00px;top:463.80px;width:36.40px;height:1.40px;background:#4a4a4a;"></div>
<div style="position:absolute;left:11px;top:434.40px;width:36.4px;height:30.20px;overflow:hidden"><span style="position:absolute;left:0;width:36.4px;text-align:center;top:10.73px;font-size:17.8px;line-height:17.8px;color:#f2f2f2;transform:scaleX(1.02)">5</span></div>
<div style="position:absolute;left:11.00px;top:471.20px;width:36.40px;height:1.40px;background:#4a4a4a;"></div>
<div style="position:absolute;left:11.00px;top:502.20px;width:36.40px;height:1.40px;background:#4a4a4a;"></div>
<div style="position:absolute;left:11px;top:472.00px;width:36.4px;height:31.00px;overflow:hidden"><span style="position:absolute;left:0;width:36.4px;text-align:center;top:11.53px;font-size:17.8px;line-height:17.8px;color:#f2f2f2;transform:scaleX(1.02)">7</span></div>
<div style="position:absolute;left:11.00px;top:527.60px;width:36.40px;height:1.40px;background:#4a4a4a;"></div>
<div style="position:absolute;left:11px;top:503.00px;width:36.4px;height:25.40px;overflow:hidden"><span style="position:absolute;left:0;width:36.4px;text-align:center;top:5.93px;font-size:17.8px;line-height:17.8px;color:#f2f2f2;transform:scaleX(1.02)">8</span></div>
<div style="position:absolute;left:11.00px;top:563.70px;width:36.40px;height:1.40px;background:#4a4a4a;"></div>
<div style="position:absolute;left:11px;top:528.40px;width:36.4px;height:36.10px;overflow:hidden"><span style="position:absolute;left:0;width:36.4px;text-align:center;top:16.63px;font-size:17.8px;line-height:17.8px;color:#f2f2f2;transform:scaleX(1.02)">9</span></div>
<div style="position:absolute;left:11.00px;top:600.70px;width:36.40px;height:1.40px;background:#4a4a4a;"></div>
<div style="position:absolute;left:11px;top:564.50px;width:36.4px;height:37.00px;overflow:hidden"><span style="position:absolute;left:0;width:36.4px;text-align:center;top:17.53px;font-size:17.8px;line-height:17.8px;color:#f2f2f2;transform:scaleX(1.02)">10</span></div>
<div style="position:absolute;left:11.00px;top:637.70px;width:36.40px;height:1.40px;background:#4a4a4a;"></div>
<div style="position:absolute;left:11px;top:601.50px;width:36.4px;height:37.00px;overflow:hidden"><span style="position:absolute;left:0;width:36.4px;text-align:center;top:17.53px;font-size:17.8px;line-height:17.8px;color:#f2f2f2;transform:scaleX(1.02)">11</span></div>
<div style="position:absolute;left:11.00px;top:674.70px;width:36.40px;height:1.40px;background:#4a4a4a;"></div>
<div style="position:absolute;left:11px;top:638.50px;width:36.4px;height:37.00px;overflow:hidden"><span style="position:absolute;left:0;width:36.4px;text-align:center;top:17.53px;font-size:17.8px;line-height:17.8px;color:#f2f2f2;transform:scaleX(1.02)">12</span></div>
<div style="position:absolute;left:11.00px;top:711.70px;width:36.40px;height:1.40px;background:#4a4a4a;"></div>
<div style="position:absolute;left:11px;top:675.50px;width:36.4px;height:37.00px;overflow:hidden"><span style="position:absolute;left:0;width:36.4px;text-align:center;top:17.53px;font-size:17.8px;line-height:17.8px;color:#f2f2f2;transform:scaleX(1.02)">13</span></div>
<div style="position:absolute;left:11.00px;top:748.70px;width:36.40px;height:1.40px;background:#4a4a4a;"></div>
<div style="position:absolute;left:11px;top:712.50px;width:36.4px;height:37.00px;overflow:hidden"><span style="position:absolute;left:0;width:36.4px;text-align:center;top:17.53px;font-size:17.8px;line-height:17.8px;color:#f2f2f2;transform:scaleX(1.02)">14</span></div>
<div style="position:absolute;left:11.00px;top:785.70px;width:36.40px;height:1.40px;background:#4a4a4a;"></div>
<div style="position:absolute;left:11px;top:749.50px;width:36.4px;height:37.00px;overflow:hidden"><span style="position:absolute;left:0;width:36.4px;text-align:center;top:17.53px;font-size:17.8px;line-height:17.8px;color:#f2f2f2;transform:scaleX(1.02)">15</span></div>
<div style="position:absolute;left:11.00px;top:822.70px;width:36.40px;height:1.40px;background:#4a4a4a;"></div>
<div style="position:absolute;left:11px;top:786.50px;width:36.4px;height:37.00px;overflow:hidden"><span style="position:absolute;left:0;width:36.4px;text-align:center;top:17.53px;font-size:17.8px;line-height:17.8px;color:#f2f2f2;transform:scaleX(1.02)">16</span></div>
<div style="position:absolute;left:11.00px;top:859.70px;width:36.40px;height:1.40px;background:#4a4a4a;"></div>
<div style="position:absolute;left:11px;top:823.50px;width:36.4px;height:37.00px;overflow:hidden"><span style="position:absolute;left:0;width:36.4px;text-align:center;top:17.53px;font-size:17.8px;line-height:17.8px;color:#f2f2f2;transform:scaleX(1.02)">17</span></div>
<div style="position:absolute;left:11.00px;top:896.70px;width:36.40px;height:1.40px;background:#4a4a4a;"></div>
<div style="position:absolute;left:11px;top:860.50px;width:36.4px;height:37.00px;overflow:hidden"><span style="position:absolute;left:0;width:36.4px;text-align:center;top:17.53px;font-size:17.8px;line-height:17.8px;color:#f2f2f2;transform:scaleX(1.02)">18</span></div>
<div style="position:absolute;left:11.00px;top:933.70px;width:36.40px;height:1.40px;background:#4a4a4a;"></div>
<div style="position:absolute;left:11px;top:897.50px;width:36.4px;height:37.00px;overflow:hidden"><span style="position:absolute;left:0;width:36.4px;text-align:center;top:17.53px;font-size:17.8px;line-height:17.8px;color:#f2f2f2;transform:scaleX(1.02)">19</span></div>
<div style="position:absolute;left:11.00px;top:970.70px;width:36.40px;height:1.40px;background:#4a4a4a;"></div>
<div style="position:absolute;left:11px;top:934.50px;width:36.4px;height:37.00px;overflow:hidden"><span style="position:absolute;left:0;width:36.4px;text-align:center;top:17.53px;font-size:17.8px;line-height:17.8px;color:#f2f2f2;transform:scaleX(1.02)">20</span></div>
<div style="position:absolute;left:11.00px;top:1007.70px;width:36.40px;height:1.40px;background:#4a4a4a;"></div>
<div style="position:absolute;left:11px;top:971.50px;width:36.4px;height:37.00px;overflow:hidden"><span style="position:absolute;left:0;width:36.4px;text-align:center;top:17.53px;font-size:17.8px;line-height:17.8px;color:#f2f2f2;transform:scaleX(1.02)">21</span></div>
<div style="position:absolute;left:11.00px;top:1044.70px;width:36.40px;height:1.40px;background:#4a4a4a;"></div>
<div style="position:absolute;left:11px;top:1008.50px;width:36.4px;height:37.00px;overflow:hidden"><span style="position:absolute;left:0;width:36.4px;text-align:center;top:17.53px;font-size:17.8px;line-height:17.8px;color:#f2f2f2;transform:scaleX(1.02)">22</span></div>
<div style="position:absolute;left:11.00px;top:1081.70px;width:36.40px;height:1.40px;background:#4a4a4a;"></div>
<div style="position:absolute;left:11px;top:1045.50px;width:36.4px;height:37.00px;overflow:hidden"><span style="position:absolute;left:0;width:36.4px;text-align:center;top:17.53px;font-size:17.8px;line-height:17.8px;color:#f2f2f2;transform:scaleX(1.02)">23</span></div>
<div style="position:absolute;left:11.00px;top:1118.70px;width:36.40px;height:1.40px;background:#4a4a4a;"></div>
<div style="position:absolute;left:11px;top:1082.50px;width:36.4px;height:37.00px;overflow:hidden"><span style="position:absolute;left:0;width:36.4px;text-align:center;top:17.53px;font-size:17.8px;line-height:17.8px;color:#f2f2f2;transform:scaleX(1.02)">24</span></div>
<div style="position:absolute;left:11.00px;top:1154.40px;width:36.40px;height:1.40px;background:#4a4a4a;"></div>
<div style="position:absolute;left:11px;top:1119.50px;width:36.4px;height:35.70px;overflow:hidden"><span style="position:absolute;left:0;width:36.4px;text-align:center;top:14.73px;font-size:17.8px;line-height:17.8px;color:#f2f2f2;transform:scaleX(1.02)">25</span></div>
<div style="position:absolute;left:11.00px;top:1195.60px;width:36.40px;height:1.40px;background:#4a4a4a;"></div>
<div style="position:absolute;left:11px;top:1159.40px;width:36.4px;height:37.00px;overflow:hidden"><span style="position:absolute;left:0;width:36.4px;text-align:center;top:17.53px;font-size:17.8px;line-height:17.8px;color:#f2f2f2;transform:scaleX(1.02)">28</span></div>
<div style="position:absolute;left:11.00px;top:1235.00px;width:36.40px;height:1.40px;background:#4a4a4a;"></div>
<div style="position:absolute;left:11px;top:1200.60px;width:36.4px;height:35.20px;overflow:hidden"><span style="position:absolute;left:0;width:36.4px;text-align:center;top:15.73px;font-size:17.8px;line-height:17.8px;color:#f2f2f2;transform:scaleX(1.02)">30</span></div>
<div style="position:absolute;left:11.00px;top:1270.40px;width:36.40px;height:1.40px;background:#4a4a4a;"></div>
<div style="position:absolute;left:11px;top:1235.80px;width:36.4px;height:35.40px;overflow:hidden"><span style="position:absolute;left:0;width:36.4px;text-align:center;top:15.93px;font-size:17.8px;line-height:17.8px;color:#f2f2f2;transform:scaleX(1.02)">31</span></div>
<div style="position:absolute;left:11.00px;top:1306.20px;width:36.40px;height:1.40px;background:#4a4a4a;"></div>
<div style="position:absolute;left:11px;top:1271.20px;width:36.4px;height:35.80px;overflow:hidden"><span style="position:absolute;left:0;width:36.4px;text-align:center;top:16.33px;font-size:17.8px;line-height:17.8px;color:#f2f2f2;transform:scaleX(1.02)">32</span></div>
<div style="position:absolute;left:11.00px;top:1341.60px;width:36.40px;height:1.40px;background:#4a4a4a;"></div>
<div style="position:absolute;left:11px;top:1307.00px;width:36.4px;height:35.40px;overflow:hidden"><span style="position:absolute;left:0;width:36.4px;text-align:center;top:15.93px;font-size:17.8px;line-height:17.8px;color:#f2f2f2;transform:scaleX(1.02)">33</span></div>
<div style="position:absolute;left:11.00px;top:1378.00px;width:36.40px;height:1.40px;background:#4a4a4a;"></div>
<div style="position:absolute;left:11px;top:1342.40px;width:36.4px;height:36.40px;overflow:hidden"><span style="position:absolute;left:0;width:36.4px;text-align:center;top:16.93px;font-size:17.8px;line-height:17.8px;color:#f2f2f2;transform:scaleX(1.02)">34</span></div>
<div style="position:absolute;left:11.00px;top:1407.20px;width:36.40px;height:1.40px;background:#4a4a4a;"></div>
<div style="position:absolute;left:11px;top:1378.80px;width:36.4px;height:29.20px;overflow:hidden"><span style="position:absolute;left:0;width:36.4px;text-align:center;top:9.73px;font-size:17.8px;line-height:17.8px;color:#f2f2f2;transform:scaleX(1.02)">35</span></div>
<div style="position:absolute;left:11.00px;top:1444.20px;width:36.40px;height:1.40px;background:#4a4a4a;"></div>
<div style="position:absolute;left:11px;top:1408.00px;width:36.4px;height:37.00px;overflow:hidden"><span style="position:absolute;left:0;width:36.4px;text-align:center;top:14.53px;font-size:17.8px;line-height:17.8px;color:#f2f2f2;transform:scaleX(1.02)">36</span></div>
<div style="position:absolute;left:11.00px;top:1484.20px;width:36.40px;height:1.40px;background:#4a4a4a;"></div>
<div style="position:absolute;left:11px;top:1449.40px;width:36.4px;height:35.60px;overflow:hidden"><span style="position:absolute;left:0;width:36.4px;text-align:center;top:16.13px;font-size:17.8px;line-height:17.8px;color:#f2f2f2;transform:scaleX(1.02)">38</span></div>
<div style="position:absolute;left:11.00px;top:1524.80px;width:36.40px;height:1.40px;background:#4a4a4a;"></div>
<div style="position:absolute;left:11px;top:1490.60px;width:36.4px;height:35.00px;overflow:hidden"><span style="position:absolute;left:0;width:36.4px;text-align:center;top:15.53px;font-size:17.8px;line-height:17.8px;color:#f2f2f2;transform:scaleX(1.02)">40</span></div>
<div style="position:absolute;left:11.00px;top:1560.20px;width:36.40px;height:1.40px;background:#4a4a4a;"></div>
<div style="position:absolute;left:11px;top:1525.60px;width:36.4px;height:35.40px;overflow:hidden"><span style="position:absolute;left:0;width:36.4px;text-align:center;top:15.93px;font-size:17.8px;line-height:17.8px;color:#f2f2f2;transform:scaleX(1.02)">41</span></div>
<div style="position:absolute;left:11.00px;top:1595.70px;width:36.40px;height:1.40px;background:#4a4a4a;"></div>
<div style="position:absolute;left:11px;top:1561.00px;width:36.4px;height:35.50px;overflow:hidden"><span style="position:absolute;left:0;width:36.4px;text-align:center;top:16.03px;font-size:17.8px;line-height:17.8px;color:#f2f2f2;transform:scaleX(1.02)">42</span></div>
<div style="position:absolute;left:11.00px;top:1624.90px;width:36.40px;height:1.40px;background:#4a4a4a;"></div>
<div style="position:absolute;left:11px;top:1596.50px;width:36.4px;height:29.20px;overflow:hidden"><span style="position:absolute;left:0;width:36.4px;text-align:center;top:9.73px;font-size:17.8px;line-height:17.8px;color:#f2f2f2;transform:scaleX(1.02)">43</span></div>
<div style="position:absolute;left:11.00px;top:1650.40px;width:36.40px;height:1.40px;background:#4a4a4a;"></div>
<div style="position:absolute;left:11px;top:1625.70px;width:36.4px;height:25.50px;overflow:hidden"><span style="position:absolute;left:0;width:36.4px;text-align:center;top:6.03px;font-size:17.8px;line-height:17.8px;color:#f2f2f2;transform:scaleX(1.02)">44</span></div>
<div style="position:absolute;left:11.00px;top:1668.70px;width:36.40px;height:1.40px;background:#4a4a4a;"></div>
<div style="position:absolute;left:11px;top:1651.20px;width:36.4px;height:18.30px;overflow:hidden"><span style="position:absolute;left:0;width:36.4px;text-align:center;top:3.33px;font-size:17.8px;line-height:17.8px;color:#f2f2f2;transform:scaleX(1.02)">45</span></div>
<div style="position:absolute;left:11.00px;top:1154.40px;width:36.40px;height:1.40px;background:#4a4a4a;"></div>
<div style="position:absolute;left:11.00px;top:1195.60px;width:36.40px;height:1.40px;background:#4a4a4a;"></div>
<div style="position:absolute;left:11.00px;top:1444.20px;width:36.40px;height:1.40px;background:#4a4a4a;"></div>
<div style="position:absolute;left:11.00px;top:1484.20px;width:36.40px;height:1.40px;background:#4a4a4a;"></div>
<div style="position:absolute;left:11px;top:465.4px;width:36.4px;height:6px;overflow:hidden"><span style="position:absolute;left:0;width:36.4px;text-align:center;top:-9px;font-size:17.2px;line-height:17.2px;color:#f2f2f2">6</span></div>
<span style="position:absolute;left:76.76px;top:306.47px;font-size:32.4px;line-height:32.4px;font-weight:700;color:#262626;white-space:pre;transform:scaleX(1.1217);transform-origin:0 0;-webkit-text-stroke:0.55px #262626;">Returns on Invested Capital</span>
<span style="position:absolute;left:77.20px;top:343.23px;font-size:28.2px;line-height:28.2px;font-weight:700;color:#000;white-space:pre;transform:scaleX(1.0652);transform-origin:0 0;-webkit-text-stroke:0.55px #000;">ABC Company Inc.</span>
<span style="position:absolute;left:75.80px;top:383.29px;font-size:18.8px;line-height:18.8px;font-weight:700;color:#2a7be4;white-space:pre;transform:scaleX(1.0711);transform-origin:0 0;-webkit-text-stroke:0.55px #2a7be4;">Go to Table of Contents</span>
<div style="position:absolute;left:75.40px;top:400.80px;width:226.80px;height:1.60px;background:#2a7be4;"></div>
<div style="position:absolute;left:47.40px;top:433.90px;width:2813.00px;height:1.10px;background:#a6a6a6;"></div>
<div style="position:absolute;left:71.20px;top:435.00px;width:475.80px;height:29.60px;background:#4b4fd1;"></div>
<div style="position:absolute;left:72.00px;top:472.00px;width:475.00px;height:30.80px;background:#4bb3e8;"></div>
<div style="position:absolute;left:702.60px;top:435.00px;width:468.00px;height:29.60px;background:#4b4fd1;"></div>
<div style="position:absolute;left:703.40px;top:472.00px;width:467.20px;height:30.80px;background:#4bb3e8;"></div>
<div style="position:absolute;left:1326.40px;top:435.00px;width:468.20px;height:29.60px;background:#4b4fd1;"></div>
<div style="position:absolute;left:1327.20px;top:472.00px;width:467.40px;height:30.80px;background:#4bb3e8;"></div>
<span style="position:absolute;left:207.50px;top:438.55px;font-size:24.4px;line-height:24.4px;font-weight:700;color:#fff;white-space:pre;transform:scaleX(1.0203);transform-origin:0 0;-webkit-text-stroke:0.55px #fff;">Years to payback</span>
<span style="position:absolute;left:291.50px;top:476.18px;font-size:24px;line-height:24px;font-weight:700;color:#fff;white-space:pre;transform:scaleX(1.0843);transform-origin:0 0;-webkit-text-stroke:0.55px #fff;">2.3</span>
<span style="position:absolute;left:748.80px;top:438.15px;font-size:24.4px;line-height:24.4px;font-weight:700;color:#fff;white-space:pre;transform:scaleX(1.0564);transform-origin:0 0;-webkit-text-stroke:0.55px #fff;">5-Year Cash Generated ($'000)</span>
<span style="position:absolute;left:890.28px;top:476.18px;font-size:24px;line-height:24px;font-weight:700;color:#fff;white-space:pre;transform:scaleX(1.1241);transform-origin:0 0;-webkit-text-stroke:0.55px #fff;">13,136</span>
<span style="position:absolute;left:1486.52px;top:438.55px;font-size:24.4px;line-height:24.4px;font-weight:700;color:#fff;white-space:pre;transform:scaleX(1.0831);transform-origin:0 0;-webkit-text-stroke:0.55px #fff;">ROIC - 2030</span>
<span style="position:absolute;left:1520.40px;top:476.18px;font-size:24px;line-height:24px;font-weight:700;color:#fff;white-space:pre;transform:scaleX(1.1904);transform-origin:0 0;-webkit-text-stroke:0.55px #fff;">31.9%</span>
<div style="position:absolute;left:71.00px;top:528.00px;width:1723.60px;height:36.60px;background:#4b4fd1;"></div>
<span style="position:absolute;left:621.23px;top:534.74px;font-size:27px;line-height:27px;font-weight:700;color:#fff;white-space:pre;transform:scaleX(1.1675);transform-origin:0 0;-webkit-text-stroke:0.55px #fff;">Returns on Invested Capital Chart ($'000)</span>
<div style="position:absolute;left:71.00px;top:1119.40px;width:1723.60px;height:36.00px;background:#4b4fd1;"></div>
<span style="position:absolute;left:665.33px;top:1125.74px;font-size:27px;line-height:27px;font-weight:700;color:#fff;white-space:pre;transform:scaleX(1.1721);transform-origin:0 0;-webkit-text-stroke:0.55px #fff;">Returns on Invested Capital ($'000)</span>
<div style="position:absolute;left:71.00px;top:1408.00px;width:1723.60px;height:37.00px;background:#4b4fd1;"></div>
<span style="position:absolute;left:694.36px;top:1414.74px;font-size:27px;line-height:27px;font-weight:700;color:#fff;white-space:pre;transform:scaleX(1.1400);transform-origin:0 0;-webkit-text-stroke:0.55px #fff;">Payback Period Analysis ($'000)</span>
<div style="position:absolute;left:276.00px;top:597.00px;width:45.80px;height:12.80px;background:#4bb3e8;"></div>
<span style="position:absolute;left:327.00px;top:591.43px;font-size:24.3px;line-height:24.3px;font-weight:700;color:#000;white-space:pre;transform:scaleX(1.0645);transform-origin:0 0;-webkit-text-stroke:0.55px #000;">Total Invested Capital</span>
<div style="position:absolute;left:771.00px;top:597.00px;width:46.00px;height:12.80px;background:#f07c71;"></div>
<span style="position:absolute;left:822.33px;top:591.43px;font-size:24.3px;line-height:24.3px;font-weight:700;color:#000;white-space:pre;transform:scaleX(1.0682);transform-origin:0 0;-webkit-text-stroke:0.55px #000;">Net Operating Profit After Tax (NOPAT)</span>
<div style="position:absolute;left:1474.80px;top:600.40px;width:48.80px;height:4.60px;background:#2db5a8;"></div>
<div style="position:absolute;left:1492px;top:595.6px;width:14px;height:14px;border-radius:50%;background:#2db5a8"></div>
<span style="position:absolute;left:1526.74px;top:591.43px;font-size:24.3px;line-height:24.3px;font-weight:700;color:#000;white-space:pre;transform:scaleX(1.0575);transform-origin:0 0;-webkit-text-stroke:0.55px #000;">ROIC</span>
<div style="position:absolute;left:180.00px;top:1018.00px;width:6.20px;height:3.00px;background:#000;"></div>
<div style="position:absolute;left:210.20px;top:946.70px;width:1584.00px;height:1.40px;background:#7bbfd8;"></div>
<span style="position:absolute;left:133.20px;top:938.48px;font-size:19.4px;line-height:19.4px;font-weight:700;color:#000;white-space:pre;transform:scaleX(1.1186);transform-origin:0 0;-webkit-text-stroke:0.55px #000;">5,000</span>
<div style="position:absolute;left:210.20px;top:876.50px;width:1584.00px;height:1.40px;background:#7bbfd8;"></div>
<span style="position:absolute;left:119.86px;top:868.28px;font-size:19.4px;line-height:19.4px;font-weight:700;color:#000;white-space:pre;transform:scaleX(1.1404);transform-origin:0 0;-webkit-text-stroke:0.55px #000;">10,000</span>
<div style="position:absolute;left:210.20px;top:805.80px;width:1584.00px;height:1.40px;background:#7bbfd8;"></div>
<span style="position:absolute;left:119.86px;top:797.58px;font-size:19.4px;line-height:19.4px;font-weight:700;color:#000;white-space:pre;transform:scaleX(1.1404);transform-origin:0 0;-webkit-text-stroke:0.55px #000;">15,000</span>
<div style="position:absolute;left:210.20px;top:735.80px;width:1584.00px;height:1.40px;background:#7bbfd8;"></div>
<span style="position:absolute;left:121.00px;top:727.58px;font-size:19.4px;line-height:19.4px;font-weight:700;color:#000;white-space:pre;transform:scaleX(1.1209);transform-origin:0 0;-webkit-text-stroke:0.55px #000;">20,000</span>
<div style="position:absolute;left:210.20px;top:664.70px;width:1584.00px;height:1.40px;background:#7bbfd8;"></div>
<span style="position:absolute;left:121.00px;top:656.48px;font-size:19.4px;line-height:19.4px;font-weight:700;color:#000;white-space:pre;transform:scaleX(1.1209);transform-origin:0 0;-webkit-text-stroke:0.55px #000;">25,000</span>
<div style="position:absolute;left:247.20px;top:981.72px;width:122.00px;height:35.88px;background:#4bb3e8;"></div>
<div style="position:absolute;left:369.20px;top:995.34px;width:122.00px;height:22.26px;background:#f07c71;"></div>
<div style="position:absolute;left:564.00px;top:943.70px;width:122.00px;height:73.90px;background:#4bb3e8;"></div>
<div style="position:absolute;left:686.00px;top:978.75px;width:122.00px;height:38.85px;background:#f07c71;"></div>
<div style="position:absolute;left:880.80px;top:887.84px;width:122.00px;height:129.76px;background:#4bb3e8;"></div>
<div style="position:absolute;left:1002.80px;top:960.93px;width:122.00px;height:56.67px;background:#f07c71;"></div>
<div style="position:absolute;left:1197.60px;top:820.93px;width:122.00px;height:196.67px;background:#4bb3e8;"></div>
<div style="position:absolute;left:1319.60px;top:949.89px;width:122.00px;height:67.71px;background:#f07c71;"></div>
<div style="position:absolute;left:1514.40px;top:747.23px;width:122.00px;height:270.37px;background:#4bb3e8;"></div>
<div style="position:absolute;left:1636.40px;top:943.11px;width:122.00px;height:74.49px;background:#f07c71;"></div>
<div style="position:absolute;left:210.20px;top:1016.60px;width:1584.00px;height:2.40px;background:#4aa8d8;"></div>
<div style="position:absolute;left:210.00px;top:1017.60px;width:1.60px;height:7.40px;background:#4aa8d8;"></div>
<div style="position:absolute;left:526.80px;top:1017.60px;width:1.60px;height:7.40px;background:#4aa8d8;"></div>
<div style="position:absolute;left:843.60px;top:1017.60px;width:1.60px;height:7.40px;background:#4aa8d8;"></div>
<div style="position:absolute;left:1160.40px;top:1017.60px;width:1.60px;height:7.40px;background:#4aa8d8;"></div>
<div style="position:absolute;left:1477.20px;top:1017.60px;width:1.60px;height:7.40px;background:#4aa8d8;"></div>
<div style="position:absolute;left:1794.00px;top:1017.60px;width:1.60px;height:7.40px;background:#4aa8d8;"></div>
<svg style="position:absolute;left:0;top:0;overflow:visible" width="10" height="10"><polyline points="367.5,743.5 684.1,705.7 1001.0,772.3 1318.2,834.6 1634.5,876.7" fill="none" stroke="#2db5a8" stroke-width="4.8"/><circle cx="367.5" cy="743.5" r="39.4" fill="#2db5a8"/><circle cx="684.1" cy="705.7" r="39.4" fill="#2db5a8"/><circle cx="1001.0" cy="772.3" r="39.4" fill="#2db5a8"/><circle cx="1318.2" cy="834.6" r="39.4" fill="#2db5a8"/><circle cx="1634.5" cy="876.7" r="39.4" fill="#2db5a8"/></svg>
<span style="position:absolute;left:336.90px;top:736.08px;font-size:19.4px;line-height:19.4px;font-weight:700;color:#fff;white-space:pre;transform:scaleX(1.1692);transform-origin:0 0;-webkit-text-stroke:0.55px #fff;">62.0%</span>
<span style="position:absolute;left:653.50px;top:698.28px;font-size:19.4px;line-height:19.4px;font-weight:700;color:#fff;white-space:pre;transform:scaleX(1.1692);transform-origin:0 0;-webkit-text-stroke:0.55px #fff;">70.8%</span>
<span style="position:absolute;left:970.40px;top:764.88px;font-size:19.4px;line-height:19.4px;font-weight:700;color:#fff;white-space:pre;transform:scaleX(1.1692);transform-origin:0 0;-webkit-text-stroke:0.55px #fff;">55.7%</span>
<span style="position:absolute;left:1287.60px;top:827.18px;font-size:19.4px;line-height:19.4px;font-weight:700;color:#fff;white-space:pre;transform:scaleX(1.1692);transform-origin:0 0;-webkit-text-stroke:0.55px #fff;">41.5%</span>
<span style="position:absolute;left:1603.90px;top:869.28px;font-size:19.4px;line-height:19.4px;font-weight:700;color:#fff;white-space:pre;transform:scaleX(1.1692);transform-origin:0 0;-webkit-text-stroke:0.55px #fff;">31.9%</span>
<span style="position:absolute;left:342.15px;top:1072.18px;font-size:22px;line-height:22px;font-weight:700;color:#000;white-space:pre;transform:scaleX(1.1107);transform-origin:0 0;-webkit-text-stroke:0.55px #000;">2026</span>
<span style="position:absolute;left:658.95px;top:1072.18px;font-size:22px;line-height:22px;font-weight:700;color:#000;white-space:pre;transform:scaleX(1.1107);transform-origin:0 0;-webkit-text-stroke:0.55px #000;">2027</span>
<span style="position:absolute;left:975.75px;top:1072.18px;font-size:22px;line-height:22px;font-weight:700;color:#000;white-space:pre;transform:scaleX(1.1107);transform-origin:0 0;-webkit-text-stroke:0.55px #000;">2028</span>
<span style="position:absolute;left:1292.55px;top:1072.18px;font-size:22px;line-height:22px;font-weight:700;color:#000;white-space:pre;transform:scaleX(1.1107);transform-origin:0 0;-webkit-text-stroke:0.55px #000;">2029</span>
<span style="position:absolute;left:1609.35px;top:1072.18px;font-size:22px;line-height:22px;font-weight:700;color:#000;white-space:pre;transform:scaleX(1.1107);transform-origin:0 0;-webkit-text-stroke:0.55px #000;">2030</span>
<div style="position:absolute;left:72.00px;top:1161.00px;width:1722.40px;height:34.60px;background:#6e74e8;"></div>
<span style="position:absolute;left:83.80px;top:1170.01px;font-size:19.6px;line-height:19.6px;font-weight:700;color:#fff;white-space:pre;-webkit-text-stroke:0.55px #fff;">Fiscal Year</span>
<div style="position:absolute;left:1013.70px;top:1161.00px;width:1.50px;height:34.60px;background:#fff;"></div>
<span style="position:absolute;left:1070.10px;top:1169.95px;font-size:19.2px;line-height:19.2px;font-weight:700;color:#fff;white-space:pre;transform:scaleX(1.1068);transform-origin:0 0;-webkit-text-stroke:0.55px #fff;">2026</span>
<div style="position:absolute;left:1169.80px;top:1161.00px;width:1.50px;height:34.60px;background:#fff;"></div>
<span style="position:absolute;left:1226.10px;top:1169.95px;font-size:19.2px;line-height:19.2px;font-weight:700;color:#fff;white-space:pre;transform:scaleX(1.1068);transform-origin:0 0;-webkit-text-stroke:0.55px #fff;">2027</span>
<div style="position:absolute;left:1325.70px;top:1161.00px;width:1.50px;height:34.60px;background:#fff;"></div>
<span style="position:absolute;left:1382.05px;top:1169.95px;font-size:19.2px;line-height:19.2px;font-weight:700;color:#fff;white-space:pre;transform:scaleX(1.0811);transform-origin:0 0;-webkit-text-stroke:0.55px #fff;">2028</span>
<div style="position:absolute;left:1481.70px;top:1161.00px;width:1.50px;height:34.60px;background:#fff;"></div>
<span style="position:absolute;left:1538.05px;top:1169.95px;font-size:19.2px;line-height:19.2px;font-weight:700;color:#fff;white-space:pre;transform:scaleX(1.1068);transform-origin:0 0;-webkit-text-stroke:0.55px #fff;">2029</span>
<div style="position:absolute;left:1637.70px;top:1161.00px;width:1.50px;height:34.60px;background:#fff;"></div>
<span style="position:absolute;left:1694.05px;top:1169.95px;font-size:19.2px;line-height:19.2px;font-weight:700;color:#fff;white-space:pre;transform:scaleX(1.1068);transform-origin:0 0;-webkit-text-stroke:0.55px #fff;">2030</span>
<span style="position:absolute;left:92.80px;top:1211.02px;font-size:18.4px;line-height:18.4px;font-weight:400;color:#111;white-space:pre;">Debts</span>
<span style="position:absolute;left:1130.40px;top:1210.80px;font-size:18.9px;line-height:18.9px;font-weight:400;color:#111;white-space:pre;transform:scaleX(0.9383);transform-origin:0 0;">283</span>
<span style="position:absolute;left:1286.30px;top:1210.80px;font-size:18.9px;line-height:18.9px;font-weight:400;color:#111;white-space:pre;transform:scaleX(0.9383);transform-origin:0 0;">237</span>
<span style="position:absolute;left:1441.33px;top:1210.80px;font-size:18.9px;line-height:18.9px;font-weight:400;color:#111;white-space:pre;transform:scaleX(0.9696);transform-origin:0 0;">190</span>
<span style="position:absolute;left:1597.33px;top:1210.80px;font-size:18.9px;line-height:18.9px;font-weight:400;color:#111;white-space:pre;transform:scaleX(0.9696);transform-origin:0 0;">141</span>
<span style="position:absolute;left:1764.50px;top:1210.80px;font-size:18.9px;line-height:18.9px;font-weight:400;color:#111;white-space:pre;transform:scaleX(0.9217);transform-origin:0 0;">90</span>
<span style="position:absolute;left:92.80px;top:1246.02px;font-size:18.4px;line-height:18.4px;font-weight:400;color:#111;white-space:pre;">Equity</span>
<span style="position:absolute;left:1114.70px;top:1245.80px;font-size:18.9px;line-height:18.9px;font-weight:400;color:#111;white-space:pre;transform:scaleX(0.9579);transform-origin:0 0;">2,271</span>
<span style="position:absolute;left:1270.60px;top:1245.80px;font-size:18.9px;line-height:18.9px;font-weight:400;color:#111;white-space:pre;transform:scaleX(0.9579);transform-origin:0 0;">5,024</span>
<span style="position:absolute;left:1426.60px;top:1245.80px;font-size:18.9px;line-height:18.9px;font-weight:400;color:#111;white-space:pre;transform:scaleX(0.9579);transform-origin:0 0;">9,049</span>
<span style="position:absolute;left:1571.42px;top:1245.80px;font-size:18.9px;line-height:18.9px;font-weight:400;color:#111;white-space:pre;transform:scaleX(0.9774);transform-origin:0 0;">13,862</span>
<span style="position:absolute;left:1727.42px;top:1245.80px;font-size:18.9px;line-height:18.9px;font-weight:400;color:#111;white-space:pre;transform:scaleX(0.9774);transform-origin:0 0;">19,160</span>
<div style="position:absolute;left:71.00px;top:1271.00px;width:1723.60px;height:36.00px;background:#4bb3e8;"></div>
<span style="position:absolute;left:77.30px;top:1279.75px;font-size:21.8px;line-height:21.8px;font-weight:700;color:#fff;white-space:pre;transform:scaleX(1.0853);transform-origin:0 0;-webkit-text-stroke:0.55px #fff;">Total Invested Capital</span>
<span style="position:absolute;left:1105.10px;top:1279.92px;font-size:21.6px;line-height:21.6px;font-weight:700;color:#fff;white-space:pre;transform:scaleX(0.9773);transform-origin:0 0;-webkit-text-stroke:0.55px #fff;">2,555</span>
<span style="position:absolute;left:1261.00px;top:1279.92px;font-size:21.6px;line-height:21.6px;font-weight:700;color:#fff;white-space:pre;transform:scaleX(0.9773);transform-origin:0 0;-webkit-text-stroke:0.55px #fff;">5,262</span>
<span style="position:absolute;left:1417.00px;top:1279.92px;font-size:21.6px;line-height:21.6px;font-weight:700;color:#fff;white-space:pre;transform:scaleX(0.9773);transform-origin:0 0;-webkit-text-stroke:0.55px #fff;">9,239</span>
<span style="position:absolute;left:1559.80px;top:1279.92px;font-size:21.6px;line-height:21.6px;font-weight:700;color:#fff;white-space:pre;-webkit-text-stroke:0.55px #fff;">14,003</span>
<span style="position:absolute;left:1715.80px;top:1279.92px;font-size:21.6px;line-height:21.6px;font-weight:700;color:#fff;white-space:pre;-webkit-text-stroke:0.55px #fff;">19,250</span>
<span style="position:absolute;left:92.77px;top:1317.02px;font-size:18.4px;line-height:18.4px;font-weight:400;color:#111;white-space:pre;transform:scaleX(1.0337);transform-origin:0 0;">Net Operating Profit After Tax (NOPAT)</span>
<span style="position:absolute;left:1113.72px;top:1316.80px;font-size:18.9px;line-height:18.9px;font-weight:400;color:#111;white-space:pre;transform:scaleX(0.9789);transform-origin:0 0;">1,585</span>
<span style="position:absolute;left:1270.60px;top:1316.80px;font-size:18.9px;line-height:18.9px;font-weight:400;color:#111;white-space:pre;transform:scaleX(0.9579);transform-origin:0 0;">2,766</span>
<span style="position:absolute;left:1426.60px;top:1316.80px;font-size:18.9px;line-height:18.9px;font-weight:400;color:#111;white-space:pre;transform:scaleX(0.9579);transform-origin:0 0;">4,035</span>
<span style="position:absolute;left:1582.60px;top:1316.80px;font-size:18.9px;line-height:18.9px;font-weight:400;color:#111;white-space:pre;transform:scaleX(0.9579);transform-origin:0 0;">4,821</span>
<span style="position:absolute;left:1738.60px;top:1316.80px;font-size:18.9px;line-height:18.9px;font-weight:400;color:#111;white-space:pre;transform:scaleX(0.9579);transform-origin:0 0;">5,304</span>
<div style="position:absolute;left:71.00px;top:1342.40px;width:1723.60px;height:36.40px;background:#4bb3e8;"></div>
<span style="position:absolute;left:76.21px;top:1351.35px;font-size:21.8px;line-height:21.8px;font-weight:700;color:#fff;white-space:pre;transform:scaleX(1.0939);transform-origin:0 0;-webkit-text-stroke:0.55px #fff;">ROIC</span>
<span style="position:absolute;left:1102.30px;top:1352.44px;font-size:19.8px;line-height:19.8px;font-weight:700;color:#fff;white-space:pre;transform:scaleX(1.1363);transform-origin:0 0;-webkit-text-stroke:0.55px #fff;">62.0%</span>
<span style="position:absolute;left:1258.20px;top:1352.44px;font-size:19.8px;line-height:19.8px;font-weight:700;color:#fff;white-space:pre;transform:scaleX(1.1363);transform-origin:0 0;-webkit-text-stroke:0.55px #fff;">70.8%</span>
<span style="position:absolute;left:1414.20px;top:1352.44px;font-size:19.8px;line-height:19.8px;font-weight:700;color:#fff;white-space:pre;transform:scaleX(1.1363);transform-origin:0 0;-webkit-text-stroke:0.55px #fff;">55.7%</span>
<span style="position:absolute;left:1570.20px;top:1352.44px;font-size:19.8px;line-height:19.8px;font-weight:700;color:#fff;white-space:pre;transform:scaleX(1.1363);transform-origin:0 0;-webkit-text-stroke:0.55px #fff;">41.5%</span>
<span style="position:absolute;left:1726.20px;top:1352.44px;font-size:19.8px;line-height:19.8px;font-weight:700;color:#fff;white-space:pre;transform:scaleX(1.1363);transform-origin:0 0;-webkit-text-stroke:0.55px #fff;">31.9%</span>
<div style="position:absolute;left:72.00px;top:1449.60px;width:1722.40px;height:35.20px;background:#6e74e8;"></div>
<span style="position:absolute;left:83.80px;top:1458.91px;font-size:19.6px;line-height:19.6px;font-weight:700;color:#fff;white-space:pre;-webkit-text-stroke:0.55px #fff;">Fiscal Year</span>
<div style="position:absolute;left:1013.70px;top:1449.60px;width:1.50px;height:35.20px;background:#fff;"></div>
<span style="position:absolute;left:1070.10px;top:1458.85px;font-size:19.2px;line-height:19.2px;font-weight:700;color:#fff;white-space:pre;transform:scaleX(1.1068);transform-origin:0 0;-webkit-text-stroke:0.55px #fff;">2026</span>
<div style="position:absolute;left:1169.80px;top:1449.60px;width:1.50px;height:35.20px;background:#fff;"></div>
<span style="position:absolute;left:1226.10px;top:1458.85px;font-size:19.2px;line-height:19.2px;font-weight:700;color:#fff;white-space:pre;transform:scaleX(1.1068);transform-origin:0 0;-webkit-text-stroke:0.55px #fff;">2027</span>
<div style="position:absolute;left:1325.70px;top:1449.60px;width:1.50px;height:35.20px;background:#fff;"></div>
<span style="position:absolute;left:1382.05px;top:1458.85px;font-size:19.2px;line-height:19.2px;font-weight:700;color:#fff;white-space:pre;transform:scaleX(1.0811);transform-origin:0 0;-webkit-text-stroke:0.55px #fff;">2028</span>
<div style="position:absolute;left:1481.70px;top:1449.60px;width:1.50px;height:35.20px;background:#fff;"></div>
<span style="position:absolute;left:1538.05px;top:1458.85px;font-size:19.2px;line-height:19.2px;font-weight:700;color:#fff;white-space:pre;transform:scaleX(1.1068);transform-origin:0 0;-webkit-text-stroke:0.55px #fff;">2029</span>
<div style="position:absolute;left:1637.70px;top:1449.60px;width:1.50px;height:35.20px;background:#fff;"></div>
<span style="position:absolute;left:1694.05px;top:1458.85px;font-size:19.2px;line-height:19.2px;font-weight:700;color:#fff;white-space:pre;transform:scaleX(1.1068);transform-origin:0 0;-webkit-text-stroke:0.55px #fff;">2030</span>
<span style="position:absolute;left:92.76px;top:1500.02px;font-size:18.4px;line-height:18.4px;font-weight:400;color:#111;white-space:pre;transform:scaleX(1.0416);transform-origin:0 0;">Net Profit After Tax</span>
<span style="position:absolute;left:1113.72px;top:1499.80px;font-size:18.9px;line-height:18.9px;font-weight:400;color:#111;white-space:pre;transform:scaleX(0.9789);transform-origin:0 0;">1,585</span>
<span style="position:absolute;left:1270.60px;top:1499.80px;font-size:18.9px;line-height:18.9px;font-weight:400;color:#111;white-space:pre;transform:scaleX(0.9579);transform-origin:0 0;">2,766</span>
<span style="position:absolute;left:1426.60px;top:1499.80px;font-size:18.9px;line-height:18.9px;font-weight:400;color:#111;white-space:pre;transform:scaleX(0.9579);transform-origin:0 0;">4,035</span>
<span style="position:absolute;left:1582.60px;top:1499.80px;font-size:18.9px;line-height:18.9px;font-weight:400;color:#111;white-space:pre;transform:scaleX(0.9579);transform-origin:0 0;">4,821</span>
<span style="position:absolute;left:1738.60px;top:1499.80px;font-size:18.9px;line-height:18.9px;font-weight:400;color:#111;white-space:pre;transform:scaleX(0.9579);transform-origin:0 0;">5,304</span>
<span style="position:absolute;left:93.80px;top:1535.02px;font-size:18.4px;line-height:18.4px;font-weight:400;color:#111;white-space:pre;transform:scaleX(0.8634);transform-origin:0 0;">CAPEX</span>
<span style="position:absolute;left:1107.82px;top:1534.80px;font-size:18.9px;line-height:18.9px;font-weight:400;color:#111;white-space:pre;transform:scaleX(0.9818);transform-origin:0 0;">(5,375)</span>
<div style="position:absolute;left:1309.00px;top:1543.40px;width:5.80px;height:2.00px;background:#111;"></div>
<div style="position:absolute;left:1465.00px;top:1543.40px;width:5.80px;height:2.00px;background:#111;"></div>
<div style="position:absolute;left:1621.00px;top:1543.40px;width:5.80px;height:2.00px;background:#111;"></div>
<div style="position:absolute;left:1777.00px;top:1543.40px;width:5.80px;height:2.00px;background:#111;"></div>
<div style="position:absolute;left:71.00px;top:1560.80px;width:1723.60px;height:35.00px;background:#4bb3e8;"></div>
<span style="position:absolute;left:77.30px;top:1569.05px;font-size:21.8px;line-height:21.8px;font-weight:700;color:#fff;white-space:pre;transform:scaleX(1.0630);transform-origin:0 0;-webkit-text-stroke:0.55px #fff;">Cumulative Cash Generated (Spent)</span>
<span style="position:absolute;left:1099.00px;top:1570.14px;font-size:19.8px;line-height:19.8px;font-weight:700;color:#fff;white-space:pre;transform:scaleX(1.0872);transform-origin:0 0;-webkit-text-stroke:0.55px #fff;">(3,790)</span>
<span style="position:absolute;left:1254.90px;top:1570.14px;font-size:19.8px;line-height:19.8px;font-weight:700;color:#fff;white-space:pre;transform:scaleX(1.0872);transform-origin:0 0;-webkit-text-stroke:0.55px #fff;">(1,024)</span>
<span style="position:absolute;left:1417.00px;top:1569.22px;font-size:21.6px;line-height:21.6px;font-weight:700;color:#fff;white-space:pre;-webkit-text-stroke:0.55px #fff;">3,011</span>
<span style="position:absolute;left:1573.00px;top:1569.22px;font-size:21.6px;line-height:21.6px;font-weight:700;color:#fff;white-space:pre;transform:scaleX(0.9773);transform-origin:0 0;-webkit-text-stroke:0.55px #fff;">7,832</span>
<span style="position:absolute;left:1715.80px;top:1569.22px;font-size:21.6px;line-height:21.6px;font-weight:700;color:#fff;white-space:pre;-webkit-text-stroke:0.55px #fff;">13,136</span>
<span style="position:absolute;left:74.60px;top:1601.61px;font-size:19.6px;line-height:19.6px;font-weight:700;color:#1a1a1a;white-space:pre;-webkit-text-stroke:0.55px #1a1a1a;">Payback year</span>
<div style="position:absolute;left:1326.00px;top:1596.80px;width:157.00px;height:29.00px;background:#2db5a8;"></div>
<span style="position:absolute;left:1398.80px;top:1601.41px;font-size:19.6px;line-height:19.6px;font-weight:700;color:#1a1a1a;white-space:pre;-webkit-text-stroke:0.55px #1a1a1a;">1</span>
<div style="position:absolute;left:1090.05px;top:1610.20px;width:6.60px;height:3.00px;background:#1a1a1a;"></div>
<div style="position:absolute;left:1246.05px;top:1610.20px;width:6.60px;height:3.00px;background:#1a1a1a;"></div>
<div style="position:absolute;left:1558.00px;top:1610.20px;width:6.60px;height:3.00px;background:#1a1a1a;"></div>
<div style="position:absolute;left:1714.00px;top:1610.20px;width:6.60px;height:3.00px;background:#1a1a1a;"></div>
<div style="position:absolute;left:2862.60px;top:279.60px;width:26.00px;height:1390.00px;background:#171717;border-radius:13px"></div>
<svg style="position:absolute;left:2869.00px;top:286.00px;overflow:visible;" width="14.4" height="10" viewBox="0 0 14.4 10"><path d="M7.2 0.6 Q7.8 0.6 8.4 1.4 L13.8 8 Q14.4 9.6 12.8 9.6 H1.6 Q0 9.6 0.6 8 L6 1.4 Q6.6 0.6 7.2 0.6Z" fill="#9b9b9b"/></svg>
<div style="position:absolute;left:2870.20px;top:304.00px;width:11.80px;height:1335.60px;background:#9b9b9b;border-radius:6px"></div>
<svg style="position:absolute;left:2869.00px;top:1653.80px;overflow:visible;" width="14.4" height="10" viewBox="0 0 14.4 10"><path d="M7.2 9.4 Q7.8 9.4 8.4 8.6 L13.8 2 Q14.4 0.4 12.8 0.4 H1.6 Q0 0.4 0.6 2 L6 8.6 Q6.6 9.4 7.2 9.4Z" fill="#9b9b9b"/></svg>
<svg style="position:absolute;left:45.90px;top:1685.60px;overflow:visible;" width="9" height="15.6" viewBox="0 0 9 15.6"><polyline points="8.2,0.8 1,7.8 8.2,14.8" fill="none" stroke="#8a8a8a" stroke-width="1.6"/></svg>
<svg style="position:absolute;left:95.40px;top:1685.60px;overflow:visible;" width="9" height="15.6" viewBox="0 0 9 15.6"><polyline points="0.8,0.8 8,7.8 0.8,14.8" fill="none" stroke="#e6e6e6" stroke-width="1.6"/></svg>
<span style="position:absolute;left:189.69px;top:1686.36px;font-size:20.6px;line-height:20.6px;font-weight:400;color:#fff;white-space:pre;transform:scaleX(1.0107);transform-origin:0 0;">Contents</span>
<div style="position:absolute;left:291.60px;top:1680.40px;width:1.20px;height:27.60px;background:#4a4a4a;"></div>
<div style="position:absolute;left:432.80px;top:1680.40px;width:1.20px;height:27.60px;background:#4a4a4a;"></div>
<div style="position:absolute;left:552.20px;top:1680.40px;width:1.20px;height:27.60px;background:#4a4a4a;"></div>
<div style="position:absolute;left:723.00px;top:1680.40px;width:1.20px;height:27.60px;background:#4a4a4a;"></div>
<div style="position:absolute;left:824.40px;top:1680.40px;width:1.20px;height:27.60px;background:#4a4a4a;"></div>
<div style="position:absolute;left:924.70px;top:1680.40px;width:1.20px;height:27.60px;background:#4a4a4a;"></div>
<div style="position:absolute;left:1050.90px;top:1680.40px;width:1.20px;height:27.60px;background:#4a4a4a;"></div>
<div style="position:absolute;left:1153.60px;top:1680.40px;width:1.20px;height:27.60px;background:#4a4a4a;"></div>
<div style="position:absolute;left:1208.40px;top:1680.40px;width:1.20px;height:27.60px;background:#4a4a4a;"></div>
<div style="position:absolute;left:1269.40px;top:1680.40px;width:1.20px;height:27.60px;background:#4a4a4a;"></div>
<div style="position:absolute;left:1331.00px;top:1680.40px;width:1.20px;height:27.60px;background:#4a4a4a;"></div>
<div style="position:absolute;left:1458.80px;top:1680.40px;width:1.20px;height:27.60px;background:#4a4a4a;"></div>
<div style="position:absolute;left:1586.70px;top:1680.40px;width:1.20px;height:27.60px;background:#4a4a4a;"></div>
<div style="position:absolute;left:1713.70px;top:1680.40px;width:1.20px;height:27.60px;background:#4a4a4a;"></div>
<div style="position:absolute;left:1775.00px;top:1680.40px;width:1.20px;height:27.60px;background:#4a4a4a;"></div>
<div style="position:absolute;left:1860.20px;top:1680.40px;width:1.20px;height:27.60px;background:#4a4a4a;"></div>
<div style="position:absolute;left:1957.80px;top:1680.40px;width:1.20px;height:27.60px;background:#4a4a4a;"></div>
<div style="position:absolute;left:2034.80px;top:1680.40px;width:1.20px;height:27.60px;background:#4a4a4a;"></div>
<div style="position:absolute;left:299.00px;top:1676.00px;width:128.00px;height:35.80px;background:#ffec66;border-radius:6.5px"></div>
<span style="position:absolute;left:312.70px;top:1686.36px;font-size:20.6px;line-height:20.6px;font-weight:400;color:#1c1c1c;white-space:pre;">Dashboard</span>
<div style="position:absolute;left:440.30px;top:1676.00px;width:105.60px;height:35.80px;background:#ffec66;border-radius:6.5px"></div>
<span style="position:absolute;left:453.54px;top:1686.36px;font-size:20.6px;line-height:20.6px;font-weight:400;color:#1c1c1c;white-space:pre;transform:scaleX(0.9632);transform-origin:0 0;">Revenue</span>
<div style="position:absolute;left:559.30px;top:1676.00px;width:157.70px;height:35.80px;background:#ffec66;border-radius:6.5px"></div>
<span style="position:absolute;left:571.07px;top:1686.36px;font-size:20.6px;line-height:20.6px;font-weight:400;color:#1c1c1c;white-space:pre;transform:scaleX(0.9346);transform-origin:0 0;">COGS &amp; OPEX</span>
<div style="position:absolute;left:730.00px;top:1676.00px;width:88.60px;height:35.80px;background:#ffec66;border-radius:6.5px"></div>
<span style="position:absolute;left:743.01px;top:1686.36px;font-size:20.6px;line-height:20.6px;font-weight:400;color:#1c1c1c;white-space:pre;transform:scaleX(0.9907);transform-origin:0 0;">Payroll</span>
<div style="position:absolute;left:832.00px;top:1676.00px;width:86.40px;height:35.80px;background:#ffec66;border-radius:6.5px"></div>
<span style="position:absolute;left:844.53px;top:1686.36px;font-size:20.6px;line-height:20.6px;font-weight:400;color:#1c1c1c;white-space:pre;transform:scaleX(0.8744);transform-origin:0 0;">CAPEX</span>
<div style="position:absolute;left:932.20px;top:1676.00px;width:112.40px;height:35.80px;background:#ffec66;border-radius:6.5px"></div>
<span style="position:absolute;left:943.80px;top:1686.36px;font-size:20.6px;line-height:20.6px;font-weight:400;color:#1c1c1c;white-space:pre;">CapTable</span>
<div style="position:absolute;left:1058.00px;top:1676.00px;width:90.00px;height:35.80px;background:#ffec66;border-radius:6.5px"></div>
<span style="position:absolute;left:1069.99px;top:1686.36px;font-size:20.6px;line-height:20.6px;font-weight:400;color:#1c1c1c;white-space:pre;transform:scaleX(1.0075);transform-origin:0 0;">Capital</span>
<div style="position:absolute;left:1161.00px;top:1676.00px;width:42.00px;height:35.80px;background:#4bb3e8;border-radius:6.5px"></div>
<span style="position:absolute;left:1173.65px;top:1686.36px;font-size:20.6px;line-height:20.6px;font-weight:400;color:#1c1c1c;white-space:pre;transform:scaleX(0.8464);transform-origin:0 0;">IS</span>
<div style="position:absolute;left:1216.00px;top:1676.00px;width:47.80px;height:35.80px;background:#4bb3e8;border-radius:6.5px"></div>
<span style="position:absolute;left:1228.44px;top:1686.36px;font-size:20.6px;line-height:20.6px;font-weight:400;color:#1c1c1c;white-space:pre;transform:scaleX(0.8619);transform-origin:0 0;">CF</span>
<div style="position:absolute;left:1276.80px;top:1676.00px;width:47.90px;height:35.80px;background:#4bb3e8;border-radius:6.5px"></div>
<span style="position:absolute;left:1289.75px;top:1686.36px;font-size:20.6px;line-height:20.6px;font-weight:400;color:#1c1c1c;white-space:pre;transform:scaleX(0.8510);transform-origin:0 0;">BS</span>
<div style="position:absolute;left:1338.00px;top:1676.00px;width:114.50px;height:35.80px;background:#4bb3e8;border-radius:6.5px"></div>
<span style="position:absolute;left:1351.00px;top:1686.36px;font-size:20.6px;line-height:20.6px;font-weight:400;color:#1c1c1c;white-space:pre;transform:scaleX(0.9564);transform-origin:0 0;">Scenarios</span>
<div style="position:absolute;left:1466.00px;top:1676.00px;width:115.00px;height:35.80px;background:#4bb3e8;border-radius:6.5px"></div>
<span style="position:absolute;left:1479.00px;top:1686.36px;font-size:20.6px;line-height:20.6px;font-weight:400;color:#1c1c1c;white-space:pre;transform:scaleX(1.0490);transform-origin:0 0;">Valuation</span>
<div style="position:absolute;left:1593.80px;top:1676.00px;width:114.20px;height:35.80px;background:#4bb3e8;border-radius:6.5px"></div>
<span style="position:absolute;left:1608.00px;top:1686.36px;font-size:20.6px;line-height:20.6px;font-weight:400;color:#1c1c1c;white-space:pre;transform:scaleX(0.9774);transform-origin:0 0;">Summary</span>
<div style="position:absolute;left:1721.00px;top:1676.00px;width:48.00px;height:35.80px;background:#4bb3e8;border-radius:6.5px"></div>
<span style="position:absolute;left:1733.77px;top:1686.36px;font-size:20.6px;line-height:20.6px;font-weight:400;color:#1c1c1c;white-space:pre;transform:scaleX(0.8315);transform-origin:0 0;">BE</span>
<div style="position:absolute;left:1867.30px;top:1676.00px;width:84.40px;height:35.80px;background:#4bb3e8;border-radius:6.5px"></div>
<span style="position:absolute;left:1879.02px;top:1686.36px;font-size:20.6px;line-height:20.6px;font-weight:400;color:#1c1c1c;white-space:pre;transform:scaleX(0.9822);transform-origin:0 0;">Charts</span>
<div style="position:absolute;left:1965.00px;top:1676.00px;width:64.00px;height:35.80px;background:#4bb3e8;border-radius:6.5px"></div>
<span style="position:absolute;left:1977.10px;top:1686.36px;font-size:20.6px;line-height:20.6px;font-weight:400;color:#1c1c1c;white-space:pre;transform:scaleX(0.9006);transform-origin:0 0;">KPIs</span>
<div style="position:absolute;left:2042.3px;top:1676px;width:29.3px;height:35.8px;overflow:hidden"><div style="position:absolute;left:0;top:0;width:120px;height:35.8px;border-radius:6.5px;background:#4bb3e8"></div><span style="position:absolute;left:12.2px;top:10.36px;font-size:20.6px;line-height:20.6px;color:#1c1c1c;white-space:pre">Scen</span></div>
<div style="position:absolute;left:1781px;top:1669.5px;width:73.4px;height:42.6px;border-radius:0 0 7px 7px;background:linear-gradient(180deg,#ffffff 0%,#f4f8fc 45%,#d3e5f4 100%)"></div>
<svg style="position:absolute;left:1774.00px;top:1669.50px;overflow:visible;" width="7" height="7" viewBox="0 0 7 7"><path d="M7 0 V7 A7 7 0 0 0 0 0 Z" fill="#fff"/></svg>
<svg style="position:absolute;left:1854.40px;top:1669.50px;overflow:visible;" width="7" height="7" viewBox="0 0 7 7"><path d="M0 0 V7 A7 7 0 0 1 7 0 Z" fill="#fff"/></svg>
<span style="position:absolute;left:1793.07px;top:1681.36px;font-size:20.6px;line-height:20.6px;font-weight:400;color:#1c1c1c;white-space:pre;transform:scaleX(0.9346);transform-origin:0 0;">ROIC</span>
<div style="position:absolute;left:1794.00px;top:1704.80px;width:47.40px;height:3.20px;background:#1f7d46;"></div>
<div style="position:absolute;left:2087.0px;top:1690px;width:4.4px;height:4.4px;border-radius:50%;background:#e6e6e6"></div>
<div style="position:absolute;left:2092.9px;top:1690px;width:4.4px;height:4.4px;border-radius:50%;background:#e6e6e6"></div>
<div style="position:absolute;left:2098.8px;top:1690px;width:4.4px;height:4.4px;border-radius:50%;background:#e6e6e6"></div>
<div style="position:absolute;left:2135.00px;top:1691.60px;width:17.00px;height:2.00px;background:#e6e6e6;"></div>
<div style="position:absolute;left:2142.50px;top:1684.00px;width:2.00px;height:17.00px;background:#e6e6e6;"></div>
<div style="position:absolute;left:2189.80px;top:1687.00px;width:3.60px;height:3.60px;background:#e6e6e6;"></div>
<div style="position:absolute;left:2189.80px;top:1692.90px;width:3.60px;height:3.60px;background:#e6e6e6;"></div>
<div style="position:absolute;left:2189.80px;top:1698.80px;width:3.60px;height:3.60px;background:#e6e6e6;"></div>
<div style="position:absolute;left:2216.40px;top:1680.00px;width:643.40px;height:26.60px;background:#171717;border-radius:13px"></div>
<svg style="position:absolute;left:2224.00px;top:1686.40px;overflow:visible;" width="10" height="14.4" viewBox="0 0 10 14.4"><path d="M0.6 7.2 Q0.6 6.6 1.4 6 L8 0.6 Q9.6 0 9.6 1.6 V12.8 Q9.6 14.4 8 13.8 L1.4 8.4 Q0.6 7.8 0.6 7.2Z" fill="#9b9b9b"/></svg>
<svg style="position:absolute;left:2841.60px;top:1686.40px;overflow:visible;" width="10" height="14.4" viewBox="0 0 10 14.4"><path d="M9.4 7.2 Q9.4 6.6 8.6 6 L2 0.6 Q0.4 0 0.4 1.6 V12.8 Q0.4 14.4 2 13.8 L8.6 8.4 Q9.4 7.8 9.4 7.2Z" fill="#9b9b9b"/></svg>
<div style="position:absolute;left:2241.60px;top:1687.00px;width:553.00px;height:12.20px;background:#9b9b9b;border-radius:6px"></div>
<div style="position:absolute;left:11.00px;top:1718.60px;width:2880.00px;height:32.40px;background:#141414;"></div>
<div style="position:absolute;left:11.00px;top:1717.60px;width:2880.00px;height:1.40px;background:#303030;"></div>
<span style="position:absolute;left:26.30px;top:1727.92px;font-size:16.4px;line-height:16.4px;font-weight:400;color:#fff;white-space:pre;transform:scaleX(0.9029);transform-origin:0 0;">Ready</span>
<svg style="position:absolute;left:99.00px;top:1725.80px;overflow:visible;" width="22.4" height="20.6" viewBox="0 0 22.4 20.6"><path d="M8 16 H1 V1 H21 V9.4" fill="none" stroke="#fff" stroke-width="2"/><path d="M1 4.2 H21" stroke="#fff" stroke-width="1.7"/><path d="M3.4 7.6 H8.4 M3.4 10.6 H7.2 M3.4 13.6 H7" stroke="#fff" stroke-width="1.6"/><circle cx="14.9" cy="13" r="5.8" fill="#141414" stroke="#fff" stroke-width="1.9"/><circle cx="14.9" cy="13" r="3" fill="#fff"/></svg>
<svg style="position:absolute;left:146.00px;top:1724.00px;overflow:visible;" width="22" height="23" viewBox="0 0 22 23"><g fill="none" stroke-linecap="round" stroke-linejoin="round"><path d="M1.8 6 Q9.4 9.8 17.4 6 M9.4 8 L8.8 14 M8.8 13 L5.2 20.6 M8.8 13 L11.4 17.4" stroke="#fff" stroke-width="4.8"/><path d="M1.8 6 Q9.4 9.8 17.4 6 M9.4 8 L8.8 14 M8.8 13 L5.2 20.6 M8.8 13 L11.4 17.4" stroke="#141414" stroke-width="1.5"/><circle cx="9.4" cy="3.5" r="2.5" stroke="#fff" stroke-width="1.7"/></g><path d="M11.8 11.8 L21 21.6 M21 11.8 L11.8 21.6" stroke="#141414" stroke-width="4"/><path d="M11.8 11.8 L21 21.6 M21 11.8 L11.8 21.6" stroke="#fff" stroke-width="1.7"/></svg>
<span style="position:absolute;left:173.30px;top:1727.92px;font-size:16.4px;line-height:16.4px;font-weight:700;color:#fff;white-space:pre;transform:scaleX(0.9554);transform-origin:0 0;-webkit-text-stroke:0.35px #fff;">Accessibility: Investigate</span>
<div style="position:absolute;left:2445.00px;top:1719.00px;width:60.00px;height:32.00px;background:#2b2b2b;"></div>
<svg style="position:absolute;left:2464.50px;top:1724.80px;overflow:visible;" width="20" height="18.4" viewBox="0 0 20 18.4"><rect x="0.9" y="0.9" width="18.2" height="16.6" fill="none" stroke="#fff" stroke-width="1.8"/><path d="M7 1 V17.4 M13 1 V17.4 M1 6.4 H19 M1 12 H19" stroke="#fff" stroke-width="1.6"/></svg>
<svg style="position:absolute;left:2524.00px;top:1724.80px;overflow:visible;" width="21.4" height="18.4" viewBox="0 0 21.4 18.4"><rect x="0.9" y="0.9" width="19.6" height="16.6" fill="none" stroke="#fff" stroke-width="1.8"/><rect x="5.4" y="4.6" width="10.6" height="9.6" fill="none" stroke="#fff" stroke-width="1.5"/><path d="M7.6 7.6 H13.8 M7.6 10.8 H13.8" stroke="#fff" stroke-width="1.3"/></svg>
<svg style="position:absolute;left:2584.00px;top:1724.80px;overflow:visible;" width="21.6" height="18.4" viewBox="0 0 21.6 18.4"><rect x="0.9" y="0.9" width="19.8" height="16.6" fill="none" stroke="#fff" stroke-width="1.8"/><path d="M6.6 1 V9.6 H14.6 V1" fill="none" stroke="#fff" stroke-width="1.8"/></svg>
<div style="position:absolute;left:2633.00px;top:1733.40px;width:11.00px;height:1.40px;background:#e6e6e6;"></div>
<div style="position:absolute;left:2653.00px;top:1733.60px;width:147.00px;height:1.20px;background:#cfcfcf;"></div>
<div style="position:absolute;left:2727.60px;top:1725.60px;width:8.20px;height:17.40px;background:#c4c4c4;border-radius:1px"></div>
<div style="position:absolute;left:2809.70px;top:1733.40px;width:10.60px;height:1.40px;background:#e6e6e6;"></div>
<div style="position:absolute;left:2814.30px;top:1728.80px;width:1.40px;height:10.60px;background:#e6e6e6;"></div>
<span style="position:absolute;left:2839.65px;top:1728.12px;font-size:16.4px;line-height:16.4px;font-weight:400;color:#fff;white-space:pre;transform:scaleX(0.9493);transform-origin:0 0;">120%</span>
<svg style="position:absolute;left:55.00px;top:140.00px;overflow:visible;" width="42" height="47" viewBox="0 0 42 47">
      <path d="M10.8 9.4 H2.4 V40.6 H19.6" fill="none" stroke="#9a9a9a" stroke-width="4.4"/>
      <path d="M23 9.4 H29.6 V18.6" fill="none" stroke="#9a9a9a" stroke-width="4.4"/>
      <path d="M6.4 11.6 V7.6 H11 C11 0.4 22 0.4 22 7.6 H26.6 V11.6 Z" fill="#292929" stroke="#9a9a9a" stroke-width="1.6"/>
      <rect x="20.6" y="19.4" width="19.6" height="26" fill="none" stroke="#b4b4b4" stroke-width="1.8"/></svg>
<svg style="position:absolute;left:115.00px;top:139.00px;overflow:visible;" width="18" height="26" viewBox="0 0 18 26">
      <path d="M4.2 0.6 L13.2 18.4 M13.8 0.6 L4.8 18.4" stroke="#e8e8e8" stroke-width="1.3" fill="none"/>
      <circle cx="4.6" cy="21.6" r="2.9" fill="none" stroke="#3a96dd" stroke-width="1.9"/>
      <circle cx="13.4" cy="21.6" r="2.9" fill="none" stroke="#3a96dd" stroke-width="1.9"/></svg>
<svg style="position:absolute;left:112.00px;top:179.00px;overflow:visible;" width="24.4" height="24" viewBox="0 0 24.4 24">
      <path d="M8.6 20.2 H0.8 V0.8 H7.6 L11 4.2" fill="none" stroke="#dadada" stroke-width="1.6"/>
      <path d="M9.6 4.8 H17.6 L23.4 10.6 V23 H9.6 Z" fill="#292929" stroke="#dadada" stroke-width="1.6"/>
      <path d="M17.6 4.8 V10.6 H23.4" fill="none" stroke="#dadada" stroke-width="1.5"/>
      <path d="M13 15.6 H20 M13 19 H20" stroke="#dadada" stroke-width="1.5"/></svg>
<svg style="position:absolute;left:112.00px;top:217.60px;overflow:visible;" width="24.4" height="23" viewBox="0 0 24.4 23">
      <path d="M21.4 0.8 a1.8 1.8 0 0 1 2.4 2.4 L18.6 9.6 L15.6 6.8 Z" fill="none" stroke="#e0e0e0" stroke-width="1.5" stroke-linejoin="round"/>
      <path d="M11.6 5.6 L20 13.2 L17.6 16 L9.2 8.2 Z" fill="none" stroke="#e0e0e0" stroke-width="1.5" stroke-linejoin="round"/>
      <path d="M9.2 8.2 C6 9.6 3.4 9.4 0.8 8.8 L9.6 22 C12.6 20.4 15.6 18.4 17.6 16 Z" fill="none" stroke="#f2c24e" stroke-width="1.5" stroke-linejoin="round"/>
      <path d="M5.8 15.4 C8.6 16 12 15.2 14.4 13.4 L17.4 16 C15.6 18.4 12.6 20.4 9.6 21.8 Z" fill="#e8a020"/></svg>
<svg style="position:absolute;left:444.00px;top:200.00px;overflow:visible;" width="23" height="23" viewBox="0 0 23 23"><g fill="#e6e6e6"><rect x="0.2" y="0" width="1.7" height="1.7"/><rect x="0" y="0.2" width="1.7" height="1.7"/><rect x="21.2" y="0.2" width="1.7" height="1.7"/><rect x="3.2" y="0" width="1.7" height="1.7"/><rect x="0" y="3.2" width="1.7" height="1.7"/><rect x="21.2" y="3.2" width="1.7" height="1.7"/><rect x="3.2" y="10.6" width="1.7" height="1.7"/><rect x="10.6" y="3.2" width="1.7" height="1.7"/><rect x="6.2" y="0" width="1.7" height="1.7"/><rect x="0" y="6.2" width="1.7" height="1.7"/><rect x="21.2" y="6.2" width="1.7" height="1.7"/><rect x="6.2" y="10.6" width="1.7" height="1.7"/><rect x="10.6" y="6.2" width="1.7" height="1.7"/><rect x="9.2" y="0" width="1.7" height="1.7"/><rect x="0" y="9.2" width="1.7" height="1.7"/><rect x="21.2" y="9.2" width="1.7" height="1.7"/><rect x="9.2" y="10.6" width="1.7" height="1.7"/><rect x="10.6" y="9.2" width="1.7" height="1.7"/><rect x="12.2" y="0" width="1.7" height="1.7"/><rect x="0" y="12.2" width="1.7" height="1.7"/><rect x="21.2" y="12.2" width="1.7" height="1.7"/><rect x="12.2" y="10.6" width="1.7" height="1.7"/><rect x="10.6" y="12.2" width="1.7" height="1.7"/><rect x="15.2" y="0" width="1.7" height="1.7"/><rect x="0" y="15.2" width="1.7" height="1.7"/><rect x="21.2" y="15.2" width="1.7" height="1.7"/><rect x="15.2" y="10.6" width="1.7" height="1.7"/><rect x="10.6" y="15.2" width="1.7" height="1.7"/><rect x="18.2" y="0" width="1.7" height="1.7"/><rect x="0" y="18.2" width="1.7" height="1.7"/><rect x="21.2" y="18.2" width="1.7" height="1.7"/><rect x="18.2" y="10.6" width="1.7" height="1.7"/><rect x="10.6" y="18.2" width="1.7" height="1.7"/><rect x="21.2" y="0" width="1.7" height="1.7"/><rect x="0" y="21.2" width="1.7" height="1.7"/><rect x="21.2" y="21.2" width="1.7" height="1.7"/><rect x="21.2" y="10.6" width="1.7" height="1.7"/><rect x="10.6" y="21.2" width="1.7" height="1.7"/></g><rect x="0" y="20.8" width="23" height="2.1" fill="#f2f2f2"/></svg>
<svg style="position:absolute;left:511.00px;top:199.60px;overflow:visible;" width="22" height="19" viewBox="0 0 22 19">
      <path d="M8.8 2.6 L1.6 9.8 L8 16.6 L15.6 9.2 V3.2 a2 2 0 0 0 -4 -0.6 V8" fill="none" stroke="#dcdcdc" stroke-width="1.5" stroke-linejoin="round"/>
      <path d="M15.2 6.6 C18.4 6 20.2 9.6 19.2 14 C18.4 11 17.2 9.6 15.2 9.4 Z" fill="#6ab0e8"/></svg>
<div style="position:absolute;left:653.00px;top:152.00px;width:22.00px;height:2.00px;background:#d2d2d2;"></div>
<div style="position:absolute;left:656.00px;top:158.00px;width:16.00px;height:2.00px;background:#d2d2d2;"></div>
<div style="position:absolute;left:653.00px;top:164.00px;width:22.00px;height:2.00px;background:#d2d2d2;"></div>
<div style="position:absolute;left:685.2px;top:146px;width:35.6px;height:35.8px;box-sizing:border-box;border:1px solid #b8b8b8;border-radius:6.5px;background:#3b3b3b"></div>
<div style="position:absolute;left:692.00px;top:156.00px;width:22.00px;height:2.00px;background:#d2d2d2;"></div>
<div style="position:absolute;left:695.00px;top:162.00px;width:16.00px;height:2.00px;background:#d2d2d2;"></div>
<div style="position:absolute;left:692.00px;top:168.00px;width:22.00px;height:2.00px;background:#d2d2d2;"></div>
<div style="position:absolute;left:731.00px;top:162.00px;width:22.00px;height:2.00px;background:#d2d2d2;"></div>
<div style="position:absolute;left:734.00px;top:168.00px;width:16.00px;height:2.00px;background:#d2d2d2;"></div>
<div style="position:absolute;left:731.00px;top:174.00px;width:22.00px;height:2.00px;background:#d2d2d2;"></div>
<div style="position:absolute;left:653.00px;top:201.00px;width:22.00px;height:2.00px;background:#d2d2d2;"></div>
<div style="position:absolute;left:653.00px;top:207.00px;width:16.00px;height:2.00px;background:#d2d2d2;"></div>
<div style="position:absolute;left:653.00px;top:213.00px;width:22.00px;height:2.00px;background:#d2d2d2;"></div>
<div style="position:absolute;left:653.00px;top:219.00px;width:16.00px;height:2.00px;background:#d2d2d2;"></div>
<div style="position:absolute;left:692.00px;top:201.00px;width:22.00px;height:2.00px;background:#d2d2d2;"></div>
<div style="position:absolute;left:695.00px;top:207.00px;width:16.00px;height:2.00px;background:#d2d2d2;"></div>
<div style="position:absolute;left:692.00px;top:213.00px;width:22.00px;height:2.00px;background:#d2d2d2;"></div>
<div style="position:absolute;left:695.00px;top:219.00px;width:16.00px;height:2.00px;background:#d2d2d2;"></div>
<div style="position:absolute;left:731.00px;top:201.00px;width:22.00px;height:2.00px;background:#d2d2d2;"></div>
<div style="position:absolute;left:737.00px;top:207.00px;width:16.00px;height:2.00px;background:#d2d2d2;"></div>
<div style="position:absolute;left:731.00px;top:213.00px;width:22.00px;height:2.00px;background:#d2d2d2;"></div>
<div style="position:absolute;left:737.00px;top:219.00px;width:16.00px;height:2.00px;background:#d2d2d2;"></div>
<div style="position:absolute;left:774.00px;top:201.00px;width:22.00px;height:2.00px;background:#d2d2d2;"></div>
<div style="position:absolute;left:786.00px;top:207.00px;width:10.00px;height:2.00px;background:#d2d2d2;"></div>
<div style="position:absolute;left:786.00px;top:213.00px;width:10.00px;height:2.00px;background:#d2d2d2;"></div>
<div style="position:absolute;left:774.00px;top:219.00px;width:22.00px;height:2.00px;background:#d2d2d2;"></div>
<div style="position:absolute;left:813.00px;top:201.00px;width:22.00px;height:2.00px;background:#d2d2d2;"></div>
<div style="position:absolute;left:826.00px;top:207.00px;width:9.00px;height:2.00px;background:#d2d2d2;"></div>
<div style="position:absolute;left:826.00px;top:213.00px;width:9.00px;height:2.00px;background:#d2d2d2;"></div>
<div style="position:absolute;left:813.00px;top:219.00px;width:22.00px;height:2.00px;background:#d2d2d2;"></div>
<svg style="position:absolute;left:774.00px;top:206.40px;overflow:visible;" width="10" height="9.6" viewBox="0 0 10 9.6"><path d="M0.8 4.8 H9.8 M4.8 0.8 L0.8 4.8 L4.8 8.8" fill="none" stroke="#3a96dd" stroke-width="1.9"/></svg>
<svg style="position:absolute;left:812.40px;top:206.40px;overflow:visible;" width="10" height="9.6" viewBox="0 0 10 9.6"><path d="M0.2 4.8 H9.2 M5.2 0.8 L9.2 4.8 L5.2 8.8" fill="none" stroke="#3a96dd" stroke-width="1.9"/></svg>
<span style="position:absolute;left:771px;top:155px;font-size:15.5px;line-height:15.5px;color:#dcdcdc;transform:rotate(-47deg);transform-origin:50% 50%">ab</span>
<svg style="position:absolute;left:780.00px;top:157.00px;overflow:visible;" width="18" height="18" viewBox="0 0 18 18"><path d="M1 17 L16.4 1.6 M9.6 1.4 H16.6 V8.4" fill="none" stroke="#3a96dd" stroke-width="1.9"/></svg>
<span style="position:absolute;left:870.80px;top:151.84px;font-size:14.6px;line-height:14.6px;font-weight:400;color:#dcdcdc;white-space:pre;transform:scaleX(1.0300);transform-origin:0 0;">ab</span>
<span style="position:absolute;left:870.80px;top:163.04px;font-size:14.6px;line-height:14.6px;font-weight:400;color:#dcdcdc;white-space:pre;transform:scaleX(0.9429);transform-origin:0 0;">c</span>
<svg style="position:absolute;left:879.60px;top:163.40px;overflow:visible;" width="12.4" height="12.6" viewBox="0 0 12.4 12.6"><path d="M11 0.6 C12.6 4.4 10 8.4 1.6 8.4 M5.6 4.4 L1.4 8.4 L5.6 12.2" fill="none" stroke="#3a96dd" stroke-width="1.9"/></svg>
<svg style="position:absolute;left:867.20px;top:200.40px;overflow:visible;" width="22.6" height="22.4" viewBox="0 0 22.6 22.4">
      <rect x="0.8" y="0.8" width="21" height="20.8" fill="none" stroke="#dcdcdc" stroke-width="1.6"/>
      <path d="M11.3 0.8 V4.6 M11.3 17.8 V21.6" stroke="#dcdcdc" stroke-width="1.6"/>
      <rect x="0.8" y="4.6" width="21" height="13.2" fill="#292929" stroke="#3a96dd" stroke-width="1.7"/>
      <path d="M3.6 11.2 H19 M6.8 8 L3.6 11.2 L6.8 14.4 M15.8 8 L19 11.2 L15.8 14.4" fill="none" stroke="#3a96dd" stroke-width="1.7"/></svg>
<svg style="position:absolute;left:1244.80px;top:202.00px;overflow:visible;" width="14" height="10" viewBox="0 0 14 10"><path d="M1 5 H13.2 M5.4 0.8 L1 5 L5.4 9.2" fill="none" stroke="#3a96dd" stroke-width="1.9"/></svg>
<span style="position:absolute;left:1260.80px;top:199.16px;font-size:13.4px;line-height:13.4px;font-weight:400;color:#dcdcdc;white-space:pre;">0</span>
<span style="position:absolute;left:1247.89px;top:211.96px;font-size:13.4px;line-height:13.4px;font-weight:400;color:#dcdcdc;white-space:pre;transform:scaleX(1.1067);transform-origin:0 0;">.00</span>
<span style="position:absolute;left:1286.79px;top:199.16px;font-size:13.4px;line-height:13.4px;font-weight:400;color:#dcdcdc;white-space:pre;transform:scaleX(1.1067);transform-origin:0 0;">.00</span>
<span style="position:absolute;left:1294.43px;top:211.96px;font-size:13.4px;line-height:13.4px;font-weight:400;color:#dcdcdc;white-space:pre;transform:scaleX(1.1728);transform-origin:0 0;">.0</span>
<svg style="position:absolute;left:1283.80px;top:212.00px;overflow:visible;" width="14" height="10" viewBox="0 0 14 10"><path d="M0.4 5 H13 M8.6 0.8 L13 5 L8.6 9.2" fill="none" stroke="#3a96dd" stroke-width="1.9"/></svg>
<svg style="position:absolute;left:1348.00px;top:145.00px;overflow:visible;" width="42.2" height="33.6" viewBox="0 0 42.2 33.6"><rect x="0.9" y="0.9" width="40.400000000000006" height="31.8" fill="none" stroke="#d6d6d6" stroke-width="1.9"/><path d="M14.2 1 V32.6" stroke="#d6d6d6" stroke-width="1.6"/><path d="M28 1 V32.6" stroke="#d6d6d6" stroke-width="1.6"/>
      <rect x="7" y="11.2" width="37.6" height="11.4" fill="#0a78d4" stroke="#62b4f2" stroke-width="1.4"/>
      <path d="M18.2 11.2 V22.6 M32 11.2 V22.6" stroke="#62b4f2" stroke-width="1.4"/>
      <path d="M18 15.2 H-1 M18 18.8 H-1" stroke="#62b4f2" stroke-width="1.3"/>
      <path d="M7.6 6.4 L-3 17 L7.6 27.6" fill="none" stroke="#4a9fe0" stroke-width="1.7"/></svg>
<svg style="position:absolute;left:1413.00px;top:145.00px;overflow:visible;" width="42.2" height="33.6" viewBox="0 0 42.2 33.6"><rect x="0.9" y="0.9" width="40.400000000000006" height="31.8" fill="none" stroke="#d6d6d6" stroke-width="1.9"/><path d="M14.2 1 V32.6" stroke="#d6d6d6" stroke-width="1.6"/><path d="M28 1 V32.6" stroke="#d6d6d6" stroke-width="1.6"/>
      <rect x="-0.6" y="11" width="6.6" height="11.8" fill="#292929"/>
      <path d="M6 11.2 H26.4 L31.4 17 L26.4 22.6 H6 Z" fill="#0a78d4" stroke="#62b4f2" stroke-width="1.4"/>
      <path d="M18 11.2 V22.6" stroke="#62b4f2" stroke-width="1.4"/>
      <path d="M27.4 9.4 L43.4 26.4 M43.4 9.4 L27.4 26.4" stroke="#ea5252" stroke-width="2"/></svg>
<svg style="position:absolute;left:1479.00px;top:145.00px;overflow:visible;" width="42.2" height="33.6" viewBox="0 0 42.2 33.6"><rect x="0.9" y="0.9" width="40.400000000000006" height="31.8" fill="none" stroke="#d6d6d6" stroke-width="1.9"/><path d="M10.8 1 V32.6" stroke="#d6d6d6" stroke-width="1.6"/><path d="M31.6 1 V32.6" stroke="#d6d6d6" stroke-width="1.6"/><path d="M1 12.2 H41.2" stroke="#d6d6d6" stroke-width="1.6"/><path d="M1 22 H41.2" stroke="#d6d6d6" stroke-width="1.6"/>
      <rect x="11.4" y="11.6" width="19.6" height="11" fill="#0a78d4" stroke="#62b4f2" stroke-width="1.4"/>
      <path d="M9.4 -4.6 H32.6 M9.6 -7 V-2.2 M32.4 -7 V-2.2" stroke="#4a9fe0" stroke-width="1.6"/></svg>
<svg style="position:absolute;left:1566.00px;top:141.40px;overflow:visible;" width="18" height="21.2" viewBox="0 0 18 21.2"><path d="M17 4 V0.9 H1.4 L10.2 10.6 L1.4 20.3 H17 V17.2" fill="none" stroke="#e2e2e2" stroke-width="1.7"/></svg>
<svg style="position:absolute;left:1563.20px;top:180.40px;overflow:visible;" width="23.6" height="21.4" viewBox="0 0 23.6 21.4"><rect x="0.9" y="0.9" width="21.8" height="19.6" fill="none" stroke="#dcdcdc" stroke-width="1.8"/><path d="M1 3.8 H22.6" stroke="#dcdcdc" stroke-width="1.3"/><path d="M11.6 6 V17.6 M6.8 13 L11.6 17.8 L16.4 13" fill="none" stroke="#3a96dd" stroke-width="1.8"/></svg>
<svg style="position:absolute;left:1563.00px;top:218.40px;overflow:visible;" width="23.4" height="23" viewBox="0 0 23.4 23"><path d="M0.9 14.8 L14.6 0.9 L22.4 8.6 L8.8 22.2 Z" fill="none" stroke="#d88ae6" stroke-width="1.6" stroke-linejoin="round"/><path d="M0.9 14.8 L6.4 9.2 L14.2 17 L8.8 22.2 Z" fill="#a83cc4" stroke="#d88ae6" stroke-width="1.4" stroke-linejoin="round"/></svg>
<span style="position:absolute;left:1730.40px;top:139.78px;font-size:24.6px;line-height:24.6px;font-weight:400;color:#3a96dd;white-space:pre;transform:scaleX(0.8471);transform-origin:0 0;">A</span>
<svg style="position:absolute;left:1730.40px;top:163.20px;overflow:visible;" width="14" height="18.4" viewBox="0 0 14 18.4"><path d="M0.4 0.9 H12.8 L0.8 17.4 H13.6" fill="none" stroke="#e2e2e2" stroke-width="1.6"/></svg>
<svg style="position:absolute;left:1748.00px;top:151.60px;overflow:visible;" width="24" height="24.4" viewBox="0 0 24 24.4"><path d="M0.9 0.9 H23.1 V4 L14.6 13.4 V23.4 H9.4 V13.4 L0.9 4 Z" fill="none" stroke="#e2e2e2" stroke-width="1.7" stroke-linejoin="miter"/></svg>
<svg style="position:absolute;left:1798.00px;top:141.00px;overflow:visible;" width="45" height="44" viewBox="0 0 45 44"><circle cx="28.2" cy="16.2" r="15" fill="none" stroke="#e2e2e2" stroke-width="1.6"/><path d="M17.4 27.2 L1 43" stroke="#e2e2e2" stroke-width="1.8"/></svg>
<svg style="position:absolute;left:1894.60px;top:139.80px;overflow:visible;" width="42.4" height="43.6" viewBox="0 0 42.4 43.6"><rect x="0.8" y="0.8" width="40.8" height="42" fill="none" stroke="#c8541f" stroke-width="1.5"/><rect x="3" y="3" width="36.4" height="37.6" fill="none" stroke="#c8541f" stroke-width="1.3"/><rect x="5.6" y="6.4" width="14.2" height="14.2" fill="none" stroke="#c8541f" stroke-width="1.5"/><rect x="5.6" y="24.6" width="14.2" height="14.2" fill="none" stroke="#c8541f" stroke-width="1.5"/><rect x="23.6" y="6.4" width="14.2" height="14.2" fill="none" stroke="#c8541f" stroke-width="1.5"/><rect x="23.6" y="24.6" width="14.2" height="14.2" fill="none" stroke="#c8541f" stroke-width="1.5"/></svg>
<svg style="position:absolute;left:1988.60px;top:141.00px;overflow:visible;" width="42.4" height="42.4" viewBox="0 0 42.4 42.4">
      <rect x="0.9" y="0.9" width="40.6" height="40.6" fill="none" stroke="#dcdcdc" stroke-width="1.7"/>
      <rect x="1" y="1" width="40.4" height="5" fill="#7a7a7a"/>
      <path d="M1 6.2 H41.4 M1 18 H41.4 M1 30 H41.4 M14 30 V41 M28 30 V41" stroke="#bdbdbd" stroke-width="1.4"/>
      <circle cx="20" cy="17.6" r="12.8" fill="#292929" stroke="#e2e2e2" stroke-width="1.6"/>
      <rect x="12.6" y="17" width="4" height="6.4" fill="#8a8a8a"/>
      <rect x="17.4" y="10" width="4.2" height="13.4" fill="none" stroke="#e8e8e8" stroke-width="1.4"/>
      <rect x="22.8" y="13" width="4" height="10.4" fill="#1e88e0" stroke="#62b4f2" stroke-width="0.8"/>
      <path d="M29 27 L41.4 41" stroke="#e2e2e2" stroke-width="1.9"/></svg>
</body></html>
